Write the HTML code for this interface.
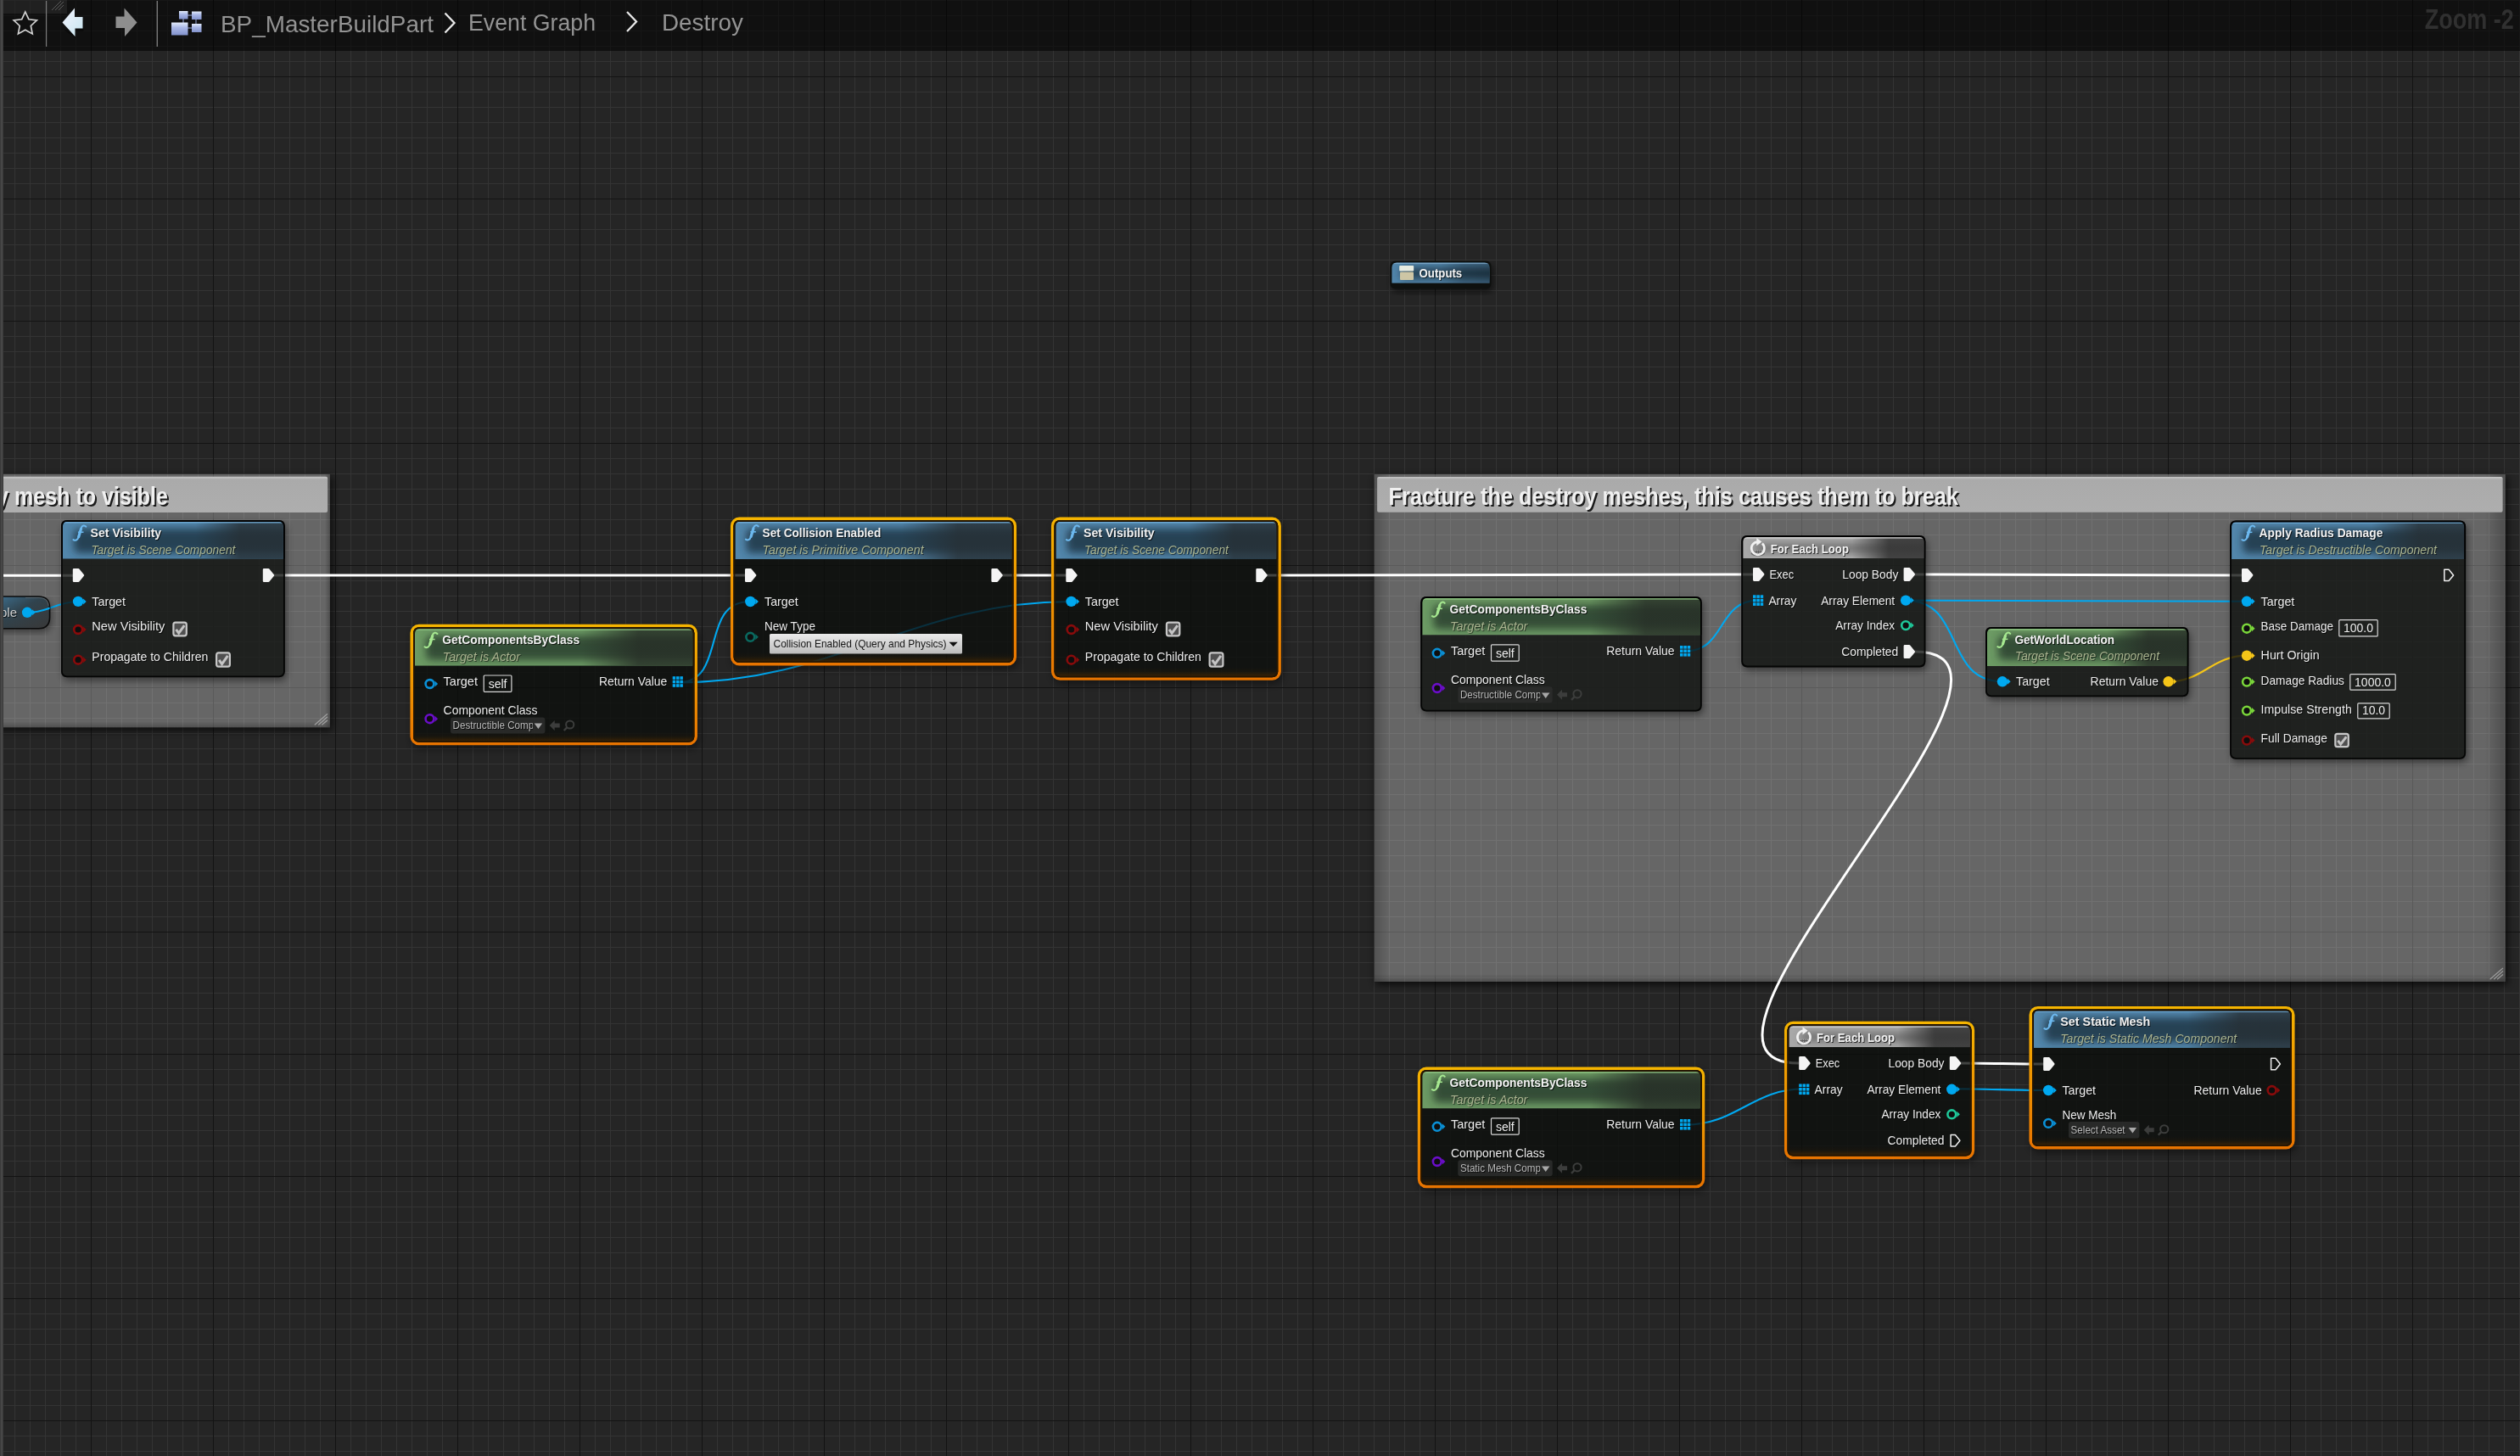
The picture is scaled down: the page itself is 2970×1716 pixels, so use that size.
<!DOCTYPE html>
<html><head><meta charset="utf-8"><title>BP_MasterBuildPart - Event Graph</title>
<style>
html,body{margin:0;padding:0;background:#262626;overflow:hidden;}
svg{display:block;font-family:"Liberation Sans", sans-serif;will-change:transform;}
</style></head><body>
<svg width="2970" height="1716" viewBox="0 0 2970 1716">
<defs>
<linearGradient id="hdrBlue" x1="0" y1="0" x2="0" y2="1">
<stop offset="0" stop-color="#6aa6d2"/><stop offset="0.06" stop-color="#5089b2"/>
<stop offset="0.45" stop-color="#22394c"/><stop offset="0.75" stop-color="#2e4e66"/>
<stop offset="1" stop-color="#4c7a9c"/></linearGradient><linearGradient id="hdrGreen" x1="0" y1="0" x2="0" y2="1">
<stop offset="0" stop-color="#9ccc90"/><stop offset="0.06" stop-color="#7eae74"/>
<stop offset="0.45" stop-color="#304a30"/><stop offset="0.75" stop-color="#3f5f3e"/>
<stop offset="1" stop-color="#5e8a5a"/></linearGradient><linearGradient id="hdrGray" x1="0" y1="0" x2="0" y2="1">
<stop offset="0" stop-color="#c8c8c8"/><stop offset="0.1" stop-color="#9a9a9a"/>
<stop offset="0.55" stop-color="#5a5a5a"/><stop offset="1" stop-color="#7a7a7a"/></linearGradient><linearGradient id="hdrShadeX" x1="0" y1="0" x2="1" y2="0">
<stop offset="0" stop-color="#000" stop-opacity="0"/><stop offset="0.5" stop-color="#000" stop-opacity="0.0"/>
<stop offset="0.72" stop-color="#000" stop-opacity="0.22"/><stop offset="1" stop-color="#000" stop-opacity="0.3"/></linearGradient><linearGradient id="hdrShadeXB" x1="0" y1="0" x2="1" y2="0">
<stop offset="0" stop-color="#262e33" stop-opacity="0"/><stop offset="0.6" stop-color="#262e33" stop-opacity="0"/>
<stop offset="0.8" stop-color="#262e33" stop-opacity="0.8"/><stop offset="1" stop-color="#262e33" stop-opacity="0.8"/></linearGradient><linearGradient id="hdrShadeXGn" x1="0" y1="0" x2="1" y2="0">
<stop offset="0" stop-color="#262d26" stop-opacity="0"/><stop offset="0.6" stop-color="#262d26" stop-opacity="0"/>
<stop offset="0.8" stop-color="#262d26" stop-opacity="0.8"/><stop offset="1" stop-color="#262d26" stop-opacity="0.8"/></linearGradient><linearGradient id="hdrShadeXG" x1="0" y1="0" x2="1" y2="0">
<stop offset="0" stop-color="#303030" stop-opacity="0"/><stop offset="0.6" stop-color="#303030" stop-opacity="0"/>
<stop offset="0.8" stop-color="#303030" stop-opacity="0.85"/><stop offset="1" stop-color="#303030" stop-opacity="0.85"/></linearGradient><filter id="hblur" x="-20%" y="-50%" width="140%" height="200%"><feGaussianBlur stdDeviation="5"/></filter><linearGradient id="selOrange" x1="0" y1="0" x2="0" y2="1">
<stop offset="0" stop-color="#f5b400"/><stop offset="1" stop-color="#e87400"/></linearGradient><linearGradient id="selInner" x1="0" y1="0" x2="0" y2="1">
<stop offset="0" stop-color="#3a2200" stop-opacity="0"/><stop offset="0.45" stop-color="#3a2200" stop-opacity="0.15"/>
<stop offset="1" stop-color="#4a2a04" stop-opacity="0.75"/></linearGradient><filter id="nshadow" x="-10%" y="-10%" width="120%" height="130%">
<feGaussianBlur in="SourceAlpha" stdDeviation="4"/><feOffset dx="2" dy="4"/>
<feComponentTransfer><feFuncA type="linear" slope="0.55"/></feComponentTransfer>
<feMerge><feMergeNode/></feMerge></filter><linearGradient id="tbArrowL" x1="0" y1="0" x2="1" y2="1">
<stop offset="0" stop-color="#f4f4ff"/><stop offset="1" stop-color="#c6e4ee"/></linearGradient><linearGradient id="bpIcon" x1="0" y1="0" x2="0" y2="1">
<stop offset="0" stop-color="#e4ecfa"/><stop offset="0.4" stop-color="#aab8e6"/><stop offset="1" stop-color="#8292cc"/></linearGradient><linearGradient id="ddLight" x1="0" y1="0" x2="0" y2="1">
<stop offset="0" stop-color="#eaeaea"/><stop offset="1" stop-color="#bcbcbc"/></linearGradient><linearGradient id="commentTitle" x1="0" y1="0" x2="0" y2="1">
<stop offset="0" stop-color="#c8c8c8"/><stop offset="0.08" stop-color="#aaaaaa"/><stop offset="1" stop-color="#aeaeae"/></linearGradient><linearGradient id="pillGrad" x1="0" y1="0" x2="1" y2="1">
<stop offset="0" stop-color="#3f7699" stop-opacity="1"/><stop offset="0.45" stop-color="#2f4450" stop-opacity="0.9"/><stop offset="1" stop-color="#383838" stop-opacity="0.6"/></linearGradient><filter id="cblur" x="-5%" y="-5%" width="110%" height="110%"><feGaussianBlur stdDeviation="5"/></filter><linearGradient id="cinL" x1="0" y1="0" x2="1" y2="0"><stop offset="0" stop-color="#000" stop-opacity="0.2"/><stop offset="1" stop-color="#000" stop-opacity="0"/></linearGradient><linearGradient id="cinR" x1="1" y1="0" x2="0" y2="0"><stop offset="0" stop-color="#000" stop-opacity="0.24"/><stop offset="1" stop-color="#000" stop-opacity="0"/></linearGradient><linearGradient id="cinB" x1="0" y1="1" x2="0" y2="0"><stop offset="0" stop-color="#000" stop-opacity="0.22"/><stop offset="1" stop-color="#000" stop-opacity="0"/></linearGradient><linearGradient id="cshB" x1="0" y1="0" x2="0" y2="1"><stop offset="0" stop-color="#000" stop-opacity="0.5"/><stop offset="1" stop-color="#000" stop-opacity="0"/></linearGradient><linearGradient id="cshR" x1="0" y1="0" x2="1" y2="0"><stop offset="0" stop-color="#000" stop-opacity="0.45"/><stop offset="1" stop-color="#000" stop-opacity="0"/></linearGradient><mask id="cm-20" maskUnits="userSpaceOnUse" x="0" y="0" width="2970" height="1716"><rect x="0" y="0" width="2970" height="1716" fill="#fff"/><rect x="-20" y="558.9" width="408.9" height="298.4" fill="#000"/></mask><clipPath id="clipTitle-20"><rect x="4" y="561.8" width="382.1" height="42.10000000000002"/></clipPath><mask id="cm1619" maskUnits="userSpaceOnUse" x="0" y="0" width="2970" height="1716"><rect x="0" y="0" width="2970" height="1716" fill="#fff"/><rect x="1619.8" y="559" width="1333.0000000000002" height="598" fill="#000"/></mask><clipPath id="clipTitle1619"><rect x="1623.1" y="562" width="1326.5" height="41.700000000000045"/></clipPath><clipPath id="hcOut"><path d="M1640.4 333.8 V315.5 Q1640.4 309.5 1646.4 309.5 H1749.5 Q1755.5 309.5 1755.5 315.5 V333.8 Z"/></clipPath><mask id="m72_613" maskUnits="userSpaceOnUse" x="0" y="0" width="2970" height="1716"><rect x="0" y="0" width="2970" height="1716" fill="#fff"/><rect x="72" y="613" width="263.8" height="185.29999999999995" rx="7" fill="#000"/></mask><clipPath id="hc72_613"><path d="M74 658.7 V620 Q74 615 79 615 H328.8 Q333.8 615 333.8 620 V658.7 Z"/></clipPath><clipPath id="pillclip"><path d="M-10 703 H45.5 Q58.6 703 58.6 716.5 V727.2 Q58.6 740.7 45.5 740.7 H-10 Z"/></clipPath><mask id="m487_739" maskUnits="userSpaceOnUse" x="0" y="0" width="2970" height="1716"><rect x="0" y="0" width="2970" height="1716" fill="#fff"/><rect x="487.0" y="739.3000000000001" width="331.4000000000001" height="135.5" rx="7" fill="#000"/></mask><clipPath id="hc487_739"><path d="M489.0 784.8000000000001 V746.3000000000001 Q489.0 741.3000000000001 494.0 741.3000000000001 H811.4000000000001 Q816.4000000000001 741.3000000000001 816.4000000000001 746.3000000000001 V784.8000000000001 Z"/></clipPath><clipPath id="dd531845"><rect x="531.0" y="845.5" width="96.90000000000009" height="19.0"/></clipPath><mask id="m864_613" maskUnits="userSpaceOnUse" x="0" y="0" width="2970" height="1716"><rect x="0" y="0" width="2970" height="1716" fill="#fff"/><rect x="864.5" y="613" width="330.0" height="168" rx="7" fill="#000"/></mask><clipPath id="hc864_613"><path d="M866.5 659 V620 Q866.5 615 871.5 615 H1187.5 Q1192.5 615 1192.5 620 V659 Z"/></clipPath><mask id="m1242_613" maskUnits="userSpaceOnUse" x="0" y="0" width="2970" height="1716"><rect x="0" y="0" width="2970" height="1716" fill="#fff"/><rect x="1242.5" y="613" width="263.79999999999995" height="185.29999999999995" rx="7" fill="#000"/></mask><clipPath id="hc1242_613"><path d="M1244.5 658.7 V620 Q1244.5 615 1249.5 615 H1499.3 Q1504.3 615 1504.3 620 V658.7 Z"/></clipPath><mask id="m1674_703" maskUnits="userSpaceOnUse" x="0" y="0" width="2970" height="1716"><rect x="0" y="0" width="2970" height="1716" fill="#fff"/><rect x="1674.3" y="703.1" width="331.4000000000001" height="135.5" rx="7" fill="#000"/></mask><clipPath id="hc1674_703"><path d="M1676.3 748.6 V710.1 Q1676.3 705.1 1681.3 705.1 H1998.7 Q2003.7 705.1 2003.7 710.1 V748.6 Z"/></clipPath><clipPath id="dd1718809"><rect x="1718.3" y="809.3" width="96.90000000000009" height="19.0"/></clipPath><mask id="m2052_631" maskUnits="userSpaceOnUse" x="0" y="0" width="2970" height="1716"><rect x="0" y="0" width="2970" height="1716" fill="#fff"/><rect x="2052.3" y="631.1" width="217.0999999999999" height="155.29999999999995" rx="7" fill="#000"/></mask><clipPath id="hc2052_631"><path d="M2054.3 658 V638.1 Q2054.3 633.1 2059.3 633.1 H2262.4 Q2267.4 633.1 2267.4 638.1 V658 Z"/></clipPath><mask id="m2340_739" maskUnits="userSpaceOnUse" x="0" y="0" width="2970" height="1716"><rect x="0" y="0" width="2970" height="1716" fill="#fff"/><rect x="2340" y="739.1" width="239.4000000000001" height="82.19999999999993" rx="7" fill="#000"/></mask><clipPath id="hc2340_739"><path d="M2342 785 V746.1 Q2342 741.1 2347 741.1 H2572.4 Q2577.4 741.1 2577.4 746.1 V785 Z"/></clipPath><mask id="m2628_613" maskUnits="userSpaceOnUse" x="0" y="0" width="2970" height="1716"><rect x="0" y="0" width="2970" height="1716" fill="#fff"/><rect x="2628.1" y="613.4" width="278.0" height="281.30000000000007" rx="7" fill="#000"/></mask><clipPath id="hc2628_613"><path d="M2630.1 659.1 V620.4 Q2630.1 615.4 2635.1 615.4 H2899.1 Q2904.1 615.4 2904.1 620.4 V659.1 Z"/></clipPath><mask id="m1674_1261" maskUnits="userSpaceOnUse" x="0" y="0" width="2970" height="1716"><rect x="0" y="0" width="2970" height="1716" fill="#fff"/><rect x="1674.3" y="1261.1" width="331.4000000000001" height="135.5" rx="7" fill="#000"/></mask><clipPath id="hc1674_1261"><path d="M1676.3 1306.6 V1268.1 Q1676.3 1263.1 1681.3 1263.1 H1998.7 Q2003.7 1263.1 2003.7 1268.1 V1306.6 Z"/></clipPath><clipPath id="dd17181367"><rect x="1718.3" y="1367.3" width="96.90000000000009" height="19.0"/></clipPath><mask id="m2106_1207" maskUnits="userSpaceOnUse" x="0" y="0" width="2970" height="1716"><rect x="0" y="0" width="2970" height="1716" fill="#fff"/><rect x="2106.5" y="1207.3000000000002" width="217.0999999999999" height="155.29999999999973" rx="7" fill="#000"/></mask><clipPath id="hc2106_1207"><path d="M2108.5 1234.2 V1214.3000000000002 Q2108.5 1209.3000000000002 2113.5 1209.3000000000002 H2316.6 Q2321.6 1209.3000000000002 2321.6 1214.3000000000002 V1234.2 Z"/></clipPath><mask id="m2395_1189" maskUnits="userSpaceOnUse" x="0" y="0" width="2970" height="1716"><rect x="0" y="0" width="2970" height="1716" fill="#fff"/><rect x="2395" y="1189.5" width="306" height="161.5" rx="7" fill="#000"/></mask><clipPath id="hc2395_1189"><path d="M2397 1235 V1196.5 Q2397 1191.5 2402 1191.5 H2694 Q2699 1191.5 2699 1196.5 V1235 Z"/></clipPath><clipPath id="dd24381322"><rect x="2438" y="1322" width="68.90000000000009" height="19.5"/></clipPath>
</defs>
<rect x="0" y="0" width="2970" height="1716" fill="#252525"/>
<path d="M17.5 0V1716M35.5 0V1716M53.5 0V1716M71.5 0V1716M89.5 0V1716M125.5 0V1716M143.5 0V1716M161.5 0V1716M179.5 0V1716M197.5 0V1716M215.5 0V1716M233.5 0V1716M269.5 0V1716M287.5 0V1716M305.5 0V1716M323.5 0V1716M341.5 0V1716M359.5 0V1716M377.5 0V1716M413.5 0V1716M431.5 0V1716M449.5 0V1716M467.5 0V1716M485.5 0V1716M503.5 0V1716M521.5 0V1716M557.5 0V1716M575.5 0V1716M593.5 0V1716M611.5 0V1716M629.5 0V1716M647.5 0V1716M665.5 0V1716M701.5 0V1716M719.5 0V1716M737.5 0V1716M755.5 0V1716M773.5 0V1716M791.5 0V1716M809.5 0V1716M845.5 0V1716M863.5 0V1716M881.5 0V1716M899.5 0V1716M917.5 0V1716M935.5 0V1716M953.5 0V1716M989.5 0V1716M1007.5 0V1716M1025.5 0V1716M1043.5 0V1716M1061.5 0V1716M1079.5 0V1716M1097.5 0V1716M1133.5 0V1716M1151.5 0V1716M1169.5 0V1716M1187.5 0V1716M1205.5 0V1716M1223.5 0V1716M1241.5 0V1716M1277.5 0V1716M1295.5 0V1716M1313.5 0V1716M1331.5 0V1716M1349.5 0V1716M1367.5 0V1716M1385.5 0V1716M1421.5 0V1716M1439.5 0V1716M1457.5 0V1716M1475.5 0V1716M1493.5 0V1716M1511.5 0V1716M1529.5 0V1716M1565.5 0V1716M1583.5 0V1716M1601.5 0V1716M1619.5 0V1716M1637.5 0V1716M1655.5 0V1716M1673.5 0V1716M1709.5 0V1716M1727.5 0V1716M1745.5 0V1716M1763.5 0V1716M1781.5 0V1716M1799.5 0V1716M1817.5 0V1716M1853.5 0V1716M1871.5 0V1716M1889.5 0V1716M1907.5 0V1716M1925.5 0V1716M1943.5 0V1716M1961.5 0V1716M1997.5 0V1716M2015.5 0V1716M2033.5 0V1716M2051.5 0V1716M2069.5 0V1716M2087.5 0V1716M2105.5 0V1716M2141.5 0V1716M2159.5 0V1716M2177.5 0V1716M2195.5 0V1716M2213.5 0V1716M2231.5 0V1716M2249.5 0V1716M2285.5 0V1716M2303.5 0V1716M2321.5 0V1716M2339.5 0V1716M2357.5 0V1716M2375.5 0V1716M2393.5 0V1716M2429.5 0V1716M2447.5 0V1716M2465.5 0V1716M2483.5 0V1716M2501.5 0V1716M2519.5 0V1716M2537.5 0V1716M2573.5 0V1716M2591.5 0V1716M2609.5 0V1716M2627.5 0V1716M2645.5 0V1716M2663.5 0V1716M2681.5 0V1716M2717.5 0V1716M2735.5 0V1716M2753.5 0V1716M2771.5 0V1716M2789.5 0V1716M2807.5 0V1716M2825.5 0V1716M2861.5 0V1716M2879.5 0V1716M2897.5 0V1716M2915.5 0V1716M2933.5 0V1716M2951.5 0V1716M2969.5 0V1716" stroke="#343434" stroke-width="1" fill="none"/>
<path d="M0 0.5H2970M0 18.5H2970M0 36.5H2970M0 54.5H2970M0 72.5H2970M0 108.5H2970M0 126.5H2970M0 144.5H2970M0 162.5H2970M0 180.5H2970M0 198.5H2970M0 216.5H2970M0 252.5H2970M0 270.5H2970M0 288.5H2970M0 306.5H2970M0 324.5H2970M0 342.5H2970M0 360.5H2970M0 396.5H2970M0 414.5H2970M0 432.5H2970M0 450.5H2970M0 468.5H2970M0 486.5H2970M0 504.5H2970M0 540.5H2970M0 558.5H2970M0 576.5H2970M0 594.5H2970M0 612.5H2970M0 630.5H2970M0 648.5H2970M0 684.5H2970M0 702.5H2970M0 720.5H2970M0 738.5H2970M0 756.5H2970M0 774.5H2970M0 792.5H2970M0 828.5H2970M0 846.5H2970M0 864.5H2970M0 882.5H2970M0 900.5H2970M0 918.5H2970M0 936.5H2970M0 972.5H2970M0 990.5H2970M0 1008.5H2970M0 1026.5H2970M0 1044.5H2970M0 1062.5H2970M0 1080.5H2970M0 1116.5H2970M0 1134.5H2970M0 1152.5H2970M0 1170.5H2970M0 1188.5H2970M0 1206.5H2970M0 1224.5H2970M0 1260.5H2970M0 1278.5H2970M0 1296.5H2970M0 1314.5H2970M0 1332.5H2970M0 1350.5H2970M0 1368.5H2970M0 1404.5H2970M0 1422.5H2970M0 1440.5H2970M0 1458.5H2970M0 1476.5H2970M0 1494.5H2970M0 1512.5H2970M0 1548.5H2970M0 1566.5H2970M0 1584.5H2970M0 1602.5H2970M0 1620.5H2970M0 1638.5H2970M0 1656.5H2970M0 1692.5H2970M0 1710.5H2970" stroke="#343434" stroke-width="1" fill="none"/>
<path d="M107.5 0V1716M0 90.5H2970M251.5 0V1716M0 234.5H2970M395.5 0V1716M0 378.5H2970M539.5 0V1716M0 522.5H2970M683.5 0V1716M0 666.5H2970M827.5 0V1716M0 810.5H2970M971.5 0V1716M0 954.5H2970M1115.5 0V1716M0 1098.5H2970M1259.5 0V1716M0 1242.5H2970M1403.5 0V1716M0 1386.5H2970M1547.5 0V1716M0 1530.5H2970M1691.5 0V1716M0 1674.5H2970M1835.5 0V1716M1979.5 0V1716M2123.5 0V1716M2267.5 0V1716M2411.5 0V1716M2555.5 0V1716M2699.5 0V1716M2843.5 0V1716" stroke="#131313" stroke-width="1" fill="none"/>
<g mask="url(#cm-20)"><rect x="-18" y="561.9" width="408.9" height="298.4" fill="#000" opacity="0.75" filter="url(#cblur)"/></g>
<rect x="-20" y="558.9" width="408.9" height="298.4" fill="#ffffff" fill-opacity="0.30"/>
<rect x="-20" y="558.9" width="18" height="298.4" fill="url(#cinL)"/>
<rect x="382.9" y="558.9" width="6" height="298.4" fill="url(#cinR)"/>
<rect x="-20" y="850.3" width="408.9" height="7" fill="url(#cinB)"/>
<rect x="-20" y="561.8" width="406.1" height="42.10000000000002" rx="2" fill="url(#commentTitle)"/>
<g clip-path="url(#clipTitle-20)">
<text x="-124.4" y="597.1" font-size="29" font-weight="bold" font-style="normal" fill="#1a1a1a" textLength="324.4" lengthAdjust="spacingAndGlyphs" >Set destroy mesh to visible</text>
<text x="-126.4" y="595.1" font-size="29" font-weight="bold" font-style="normal" fill="#f0f0f0" textLength="324.4" lengthAdjust="spacingAndGlyphs" >Set destroy mesh to visible</text>
</g>
<path d="M371.2 854.0999999999999 L385.7 841.5999999999999 M375.7 854.0999999999999 L385.7 845.0999999999999 M379.7 854.0999999999999 L385.7 849.0999999999999" stroke="#c8c8c8" stroke-opacity="0.6" stroke-width="1.3" stroke-linecap="round"/>
<g mask="url(#cm1619)"><rect x="1621.8" y="562" width="1333.0000000000002" height="598" fill="#000" opacity="0.75" filter="url(#cblur)"/></g>
<rect x="1619.8" y="559" width="1333.0000000000002" height="598" fill="#ffffff" fill-opacity="0.30"/>
<rect x="1619.8" y="559" width="18" height="598" fill="url(#cinL)"/>
<rect x="2928.8" y="559" width="24" height="598" fill="url(#cinR)"/>
<rect x="1619.8" y="1148" width="1333.0000000000002" height="9" fill="url(#cinB)"/>
<rect x="1623.1" y="562" width="1326.5" height="41.700000000000045" rx="2" fill="url(#commentTitle)"/>
<g clip-path="url(#clipTitle1619)">
<text x="1638.6" y="596.9" font-size="29" font-weight="bold" font-style="normal" fill="#1a1a1a" textLength="671.4" lengthAdjust="spacingAndGlyphs" >Fracture the destroy meshes, this causes them to break</text>
<text x="1636.6" y="594.9" font-size="29" font-weight="bold" font-style="normal" fill="#f0f0f0" textLength="671.4" lengthAdjust="spacingAndGlyphs" >Fracture the destroy meshes, this causes them to break</text>
</g>
<path d="M2935.1000000000004 1153.8 L2949.6000000000004 1141.3 M2939.6000000000004 1153.8 L2949.6000000000004 1144.8 M2943.6000000000004 1153.8 L2949.6000000000004 1148.8" stroke="#c8c8c8" stroke-opacity="0.6" stroke-width="1.3" stroke-linecap="round"/>
<path d="M4.0 678.2 C32.0 678.2 60.0 678.2 88.0 678.2" fill="none" stroke="#ffffff" stroke-width="3.0" stroke-opacity="1"/>
<path d="M322.0 678.0 C508.0 678.0 694.0 678.0 880.0 678.0" fill="none" stroke="#ffffff" stroke-width="3.0" stroke-opacity="1"/>
<path d="M1180.0 678.0 C1206.0 678.0 1232.0 678.0 1258.0 678.0" fill="none" stroke="#ffffff" stroke-width="3.0" stroke-opacity="1"/>
<path d="M1493.0 678.0 C1685.0 678.0 1876.0 677.0 2068.0 677.0" fill="none" stroke="#ffffff" stroke-width="3.0" stroke-opacity="1"/>
<path d="M2255.0 677.0 C2385.0 677.0 2514.0 678.0 2644.0 678.0" fill="none" stroke="#ffffff" stroke-width="3.0" stroke-opacity="1"/>
<path d="M2256.6 768.0 C2447.7 768.0 1928.9 1253.0 2120.0 1253.0" fill="none" stroke="#ffffff" stroke-width="3.0" stroke-opacity="1"/>
<path d="M2309.0 1253.0 C2343.0 1253.0 2376.0 1254.0 2410.0 1254.0" fill="none" stroke="#ffffff" stroke-width="3.0" stroke-opacity="1"/>
<path d="M32.0 722.0 C56.3 722.0 67.7 709.0 92.0 709.0" fill="none" stroke="#00a8f0" stroke-width="2.1" stroke-opacity="1"/>
<path d="M798.0 804.5 C858.5 804.5 823.5 709.0 884.0 709.0" fill="none" stroke="#00a8f0" stroke-width="2.1" stroke-opacity="1"/>
<path d="M798.0 804.5 C984.5 804.5 1075.5 709.0 1262.0 709.0" fill="none" stroke="#00a8f0" stroke-width="2.1" stroke-opacity="1"/>
<path d="M1986.0 767.5 C2034.6 767.5 2023.4 707.6 2072.0 707.6" fill="none" stroke="#00a8f0" stroke-width="2.1" stroke-opacity="1"/>
<path d="M2246.0 707.6 C2380.4 707.6 2513.6 708.8 2648.0 708.8" fill="none" stroke="#00a8f0" stroke-width="2.1" stroke-opacity="1"/>
<path d="M2246.0 707.6 C2315.9 707.6 2290.1 803.3 2360.0 803.3" fill="none" stroke="#00a8f0" stroke-width="2.1" stroke-opacity="1"/>
<path d="M1986.0 1325.7 C2046.8 1325.7 2065.2 1283.3 2126.0 1283.3" fill="none" stroke="#00a8f0" stroke-width="2.1" stroke-opacity="1"/>
<path d="M2300.0 1283.3 C2338.6 1283.3 2375.4 1285.0 2414.0 1285.0" fill="none" stroke="#00a8f0" stroke-width="2.1" stroke-opacity="1"/>
<path d="M2555.6 803.3 C2596.6 803.3 2607.0 772.7 2648.0 772.7" fill="none" stroke="#f5c518" stroke-width="2.2" stroke-opacity="1"/>
<rect x="1638.4" y="307.5" width="119.09999999999991" height="33.0" rx="6" fill="#000" filter="url(#nshadow)"/>
<rect x="1638.4" y="307.5" width="119.09999999999991" height="33.0" rx="6" fill="#0e100e"/>
<g clip-path="url(#hcOut)">
<rect x="1638.4" y="307.5" width="119.09999999999991" height="26.30000000000001" fill="#5286ab"/>
<rect x="1650.4" y="315.5" width="119.09999999999991" height="13.300000000000011" rx="5" fill="#233a4c" opacity="0.92" filter="url(#hblur)"/>
<rect x="1638.4" y="307.5" width="119.09999999999991" height="26.30000000000001" fill="url(#hdrShadeX)"/>
<rect x="1638.4" y="309.5" width="119.09999999999991" height="1.6" fill="#8ab8d8" opacity="0.7"/>
</g>
<rect x="1649.2" y="313" width="17" height="6.5" rx="1" fill="#e8ece0"/>
<rect x="1650" y="320.5" width="16" height="9.5" rx="1" fill="#cdc6a5"/>
<text x="1673.6" y="328.0" font-size="14" font-weight="bold" font-style="normal" fill="rgba(0,0,0,0.6)" textLength="50.6" lengthAdjust="spacingAndGlyphs" >Outputs</text>
<text x="1672.6" y="327.0" font-size="14" font-weight="bold" font-style="normal" fill="#f4f4f4" textLength="50.6" lengthAdjust="spacingAndGlyphs" >Outputs</text>
<g mask="url(#m72_613)"><rect x="72" y="613" width="263.8" height="185.29999999999995" rx="7" fill="#000" opacity="0.8" filter="url(#nshadow)"/></g>
<rect x="72" y="613" width="263.8" height="185.29999999999995" rx="7" fill="rgba(0,0,0,0.0)"/>
<path d="M72 658.7 H335.8 V791.3 Q335.8 798.3 328.8 798.3 H79 Q72 798.3 72 791.3 Z" fill="rgba(12,14,12,0.78)"/>
<path d="M72 658.7 V620 Q72 613 79 613 H328.8 Q335.8 613 335.8 620 V658.7 Z" fill="#050505"/>
<g clip-path="url(#hc72_613)">
<rect x="72" y="613" width="263.8" height="45.700000000000045" fill="#5286ab"/>
<rect x="87" y="623" width="263.8" height="28.700000000000045" rx="6" fill="#233a4c" opacity="0.9" filter="url(#hblur)"/>
<rect x="72" y="613" width="263.8" height="45.700000000000045" fill="url(#hdrShadeXB)"/>
<rect x="72" y="615" width="263.8" height="1.6" fill="#74b0dc" opacity="0.75"/>
</g>
<rect x="72.9" y="613.9" width="262.0" height="183.49999999999994" rx="6" fill="none" stroke="rgba(0,0,0,0.85)" stroke-width="1.8"/>
<path d="M101.3 620.6999999999999 C99.69999999999999 618.6999999999999 96.5 619.1 95.69999999999999 622.3 L92.3 633.5 C91.39999999999999 636.6999999999999 88.69999999999999 637.5 86.5 636.1" fill="none" stroke="#6cb8ee" stroke-width="2.1" stroke-linecap="round"/>
<path d="M95.5 623.4 L92.69999999999999 632.6999999999999" stroke="#6cb8ee" stroke-width="3.2" stroke-linecap="round"/>
<path d="M91.89999999999999 627.1999999999999 H98.5" stroke="#6cb8ee" stroke-width="1.5"/>
<text x="107.6" y="634.1" font-size="14.3" font-weight="bold" font-style="normal" fill="rgba(0,0,0,0.75)" textLength="83.6" lengthAdjust="spacingAndGlyphs" >Set Visibility</text>
<text x="106.6" y="633.1" font-size="14.3" font-weight="bold" font-style="normal" fill="#f2f2f2" textLength="83.6" lengthAdjust="spacingAndGlyphs" >Set Visibility</text>
<text x="108.4" y="654.0" font-size="14.6" font-weight="normal" font-style="italic" fill="rgba(0,0,0,0.5)" textLength="170.0" lengthAdjust="spacingAndGlyphs" >Target is Scene Component</text>
<text x="107.4" y="653.0" font-size="14.6" font-weight="normal" font-style="italic" fill="#a9b38f" textLength="170.0" lengthAdjust="spacingAndGlyphs" >Target is Scene Component</text>
<path d="M87.1 671.3 H92.39999999999999 L97.89999999999999 678 L92.39999999999999 684.7 H87.1 Z" fill="#f4f4f4" stroke="#f4f4f4" stroke-width="2.6" stroke-linejoin="round"/>
<path d="M311.1 671.3 H316.40000000000003 L321.90000000000003 678 L316.40000000000003 684.7 H311.1 Z" fill="#f4f4f4" stroke="#f4f4f4" stroke-width="2.6" stroke-linejoin="round"/>
<circle cx="92.1" cy="708.9" r="6.2" fill="#00a8f0"/><path d="M98.1 705.4 L101.69999999999999 708.9 L98.1 712.4 Z" fill="#00a8f0"/>
<text x="109.3" y="714.8" font-size="14.2" font-weight="normal" font-style="normal" fill="rgba(0,0,0,0.7)" textLength="39.7" lengthAdjust="spacingAndGlyphs" >Target</text>
<text x="108.3" y="713.8" font-size="14.2" font-weight="normal" font-style="normal" fill="#ececec" textLength="39.7" lengthAdjust="spacingAndGlyphs" >Target</text>
<path d="M98.1 738.5 L101.69999999999999 742 L98.1 745.5 Z" fill="#880b0b"/><circle cx="92.1" cy="742" r="4.9" fill="#0e0e0e" stroke="#880b0b" stroke-width="2.6"/>
<text x="109.3" y="743.8" font-size="14.2" font-weight="normal" font-style="normal" fill="rgba(0,0,0,0.7)" textLength="86.0" lengthAdjust="spacingAndGlyphs" >New Visibility</text>
<text x="108.3" y="742.8" font-size="14.2" font-weight="normal" font-style="normal" fill="#ececec" textLength="86.0" lengthAdjust="spacingAndGlyphs" >New Visibility</text>
<rect x="204.4" y="733.7" width="15.399999999999995" height="15.599999999999955" rx="2.5" fill="#505050" stroke="#c8c8c8" stroke-width="2.2"/>
<path d="M207.5 741.856 L210.692 746.1999999999999 L217.3 737.2" fill="none" stroke="#c4c4c4" stroke-width="3"/>
<path d="M98.1 774.2 L101.69999999999999 777.7 L98.1 781.2 Z" fill="#880b0b"/><circle cx="92.1" cy="777.7" r="4.9" fill="#0e0e0e" stroke="#880b0b" stroke-width="2.6"/>
<text x="109.3" y="779.9" font-size="14.2" font-weight="normal" font-style="normal" fill="rgba(0,0,0,0.7)" textLength="137.0" lengthAdjust="spacingAndGlyphs" >Propagate to Children</text>
<text x="108.3" y="778.9" font-size="14.2" font-weight="normal" font-style="normal" fill="#ececec" textLength="137.0" lengthAdjust="spacingAndGlyphs" >Propagate to Children</text>
<rect x="255.1" y="769.4" width="15.8" height="16.3" rx="2.5" fill="#505050" stroke="#c8c8c8" stroke-width="2.2"/>
<path d="M258.2 777.92 L261.56 782.5999999999999 L268.4 772.9" fill="none" stroke="#c4c4c4" stroke-width="3"/>
<path d="M-10 703 H45.5 Q58.6 703 58.6 716.5 V727.2 Q58.6 740.7 45.5 740.7 H-10 Z" fill="#000" opacity="0.8" filter="url(#nshadow)"/>
<path d="M-10 703 H45.5 Q58.6 703 58.6 716.5 V727.2 Q58.6 740.7 45.5 740.7 H-10 Z" fill="#3a3a3a"/>
<path d="M-10 703 H45.5 Q58.6 703 58.6 716.5 V727.2 Q58.6 740.7 45.5 740.7 H-10 Z" fill="url(#pillGrad)" stroke="#0a0a0a" stroke-width="1.6"/>
<path d="M30 704.5 H45.5 Q57 704.5 57.2 714" fill="none" stroke="#9a9a9a" stroke-opacity="0.35" stroke-width="1.2"/>
<text x="-22.9" y="728.0" font-size="15" font-weight="normal" font-style="normal" fill="rgba(0,0,0,0.7)" >Visible</text>
<text x="-23.9" y="727.0" font-size="15" font-weight="normal" font-style="normal" fill="#d0d0d0" >Visible</text>
<g clip-path="url(#pillclip)">
<path d="M32.0 722.0 C56.3 722.0 67.7 709.0 92.0 709.0" fill="none" stroke="#00a8f0" stroke-width="2.1" stroke-opacity="1"/>
</g>
<circle cx="32.1" cy="721.8" r="6.2" fill="#00a8f0"/><path d="M38.1 718.3 L41.7 721.8 L38.1 725.3 Z" fill="#00a8f0"/>
<g mask="url(#m487_739)"><rect x="483.5" y="735.8000000000001" width="338.4000000000001" height="142.5" rx="10.5" fill="#000" opacity="0.8" filter="url(#nshadow)"/></g>
<rect x="485.25" y="737.5500000000001" width="334.9000000000001" height="139.0" rx="8.5" fill="none" stroke="url(#selOrange)" stroke-width="3.6"/>
<rect x="487.0" y="739.3000000000001" width="331.4000000000001" height="135.5" rx="7" fill="rgba(0,0,0,0.0)"/>
<path d="M487.0 784.8000000000001 H818.4000000000001 V867.8000000000001 Q818.4000000000001 874.8000000000001 811.4000000000001 874.8000000000001 H494.0 Q487.0 874.8000000000001 487.0 867.8000000000001 Z" fill="rgba(12,14,12,0.78)"/>
<rect x="488.0" y="862.8000000000001" width="329.4000000000001" height="11" rx="6" fill="url(#selInner)"/>
<path d="M487.0 784.8000000000001 V746.3000000000001 Q487.0 739.3000000000001 494.0 739.3000000000001 H811.4000000000001 Q818.4000000000001 739.3000000000001 818.4000000000001 746.3000000000001 V784.8000000000001 Z" fill="#050505"/>
<g clip-path="url(#hc487_739)">
<rect x="487.0" y="739.3000000000001" width="331.4000000000001" height="45.5" fill="#6c9a64"/>
<rect x="502.0" y="749.3000000000001" width="331.4000000000001" height="28.5" rx="6" fill="#2e4530" opacity="0.9" filter="url(#hblur)"/>
<rect x="487.0" y="739.3000000000001" width="331.4000000000001" height="45.5" fill="url(#hdrShadeXGn)"/>
<rect x="487.0" y="741.3000000000001" width="331.4000000000001" height="1.6" fill="#94cc88" opacity="0.75"/>
</g>
<rect x="487.9" y="740.2" width="329.6000000000001" height="133.7" rx="6" fill="none" stroke="rgba(38,22,2,0.95)" stroke-width="1.8"/>
<path d="M515.4000000000001 747.0 C513.8000000000001 745.0 510.6 745.4000000000001 509.80000000000007 748.6 L506.40000000000003 759.8000000000001 C505.50000000000006 763.0 502.80000000000007 763.8000000000001 500.6 762.4000000000001" fill="none" stroke="#a6e890" stroke-width="2.1" stroke-linecap="round"/>
<path d="M509.6 749.7 L506.80000000000007 759.0" stroke="#a6e890" stroke-width="3.2" stroke-linecap="round"/>
<path d="M506.00000000000006 753.5 H512.6" stroke="#a6e890" stroke-width="1.5"/>
<text x="522.3" y="760.3" font-size="14.3" font-weight="bold" font-style="normal" fill="rgba(0,0,0,0.75)" textLength="161.8" lengthAdjust="spacingAndGlyphs" >GetComponentsByClass</text>
<text x="521.3" y="759.3" font-size="14.3" font-weight="bold" font-style="normal" fill="#f2f2f2" textLength="161.8" lengthAdjust="spacingAndGlyphs" >GetComponentsByClass</text>
<text x="522.7" y="780.1" font-size="14.6" font-weight="normal" font-style="italic" fill="rgba(0,0,0,0.5)" textLength="91.4" lengthAdjust="spacingAndGlyphs" >Target is Actor</text>
<text x="521.7" y="779.1" font-size="14.6" font-weight="normal" font-style="italic" fill="#a9b38f" textLength="91.4" lengthAdjust="spacingAndGlyphs" >Target is Actor</text>
<path d="M512.5 802.5 L516.1 806.0 L512.5 809.5 Z" fill="#0a90d6"/><circle cx="506.5" cy="806.0" r="4.9" fill="#0e0e0e" stroke="#0a90d6" stroke-width="2.6"/>
<text x="523.6" y="809.3" font-size="14.2" font-weight="normal" font-style="normal" fill="rgba(0,0,0,0.7)" textLength="40.4" lengthAdjust="spacingAndGlyphs" >Target</text>
<text x="522.6" y="808.3" font-size="14.2" font-weight="normal" font-style="normal" fill="#ececec" textLength="40.4" lengthAdjust="spacingAndGlyphs" >Target</text>
<rect x="570.2" y="796.0" width="32.700000000000045" height="19.300000000000068" rx="1" fill="none" stroke="#d8d8d8" stroke-width="1.2"/>
<text x="586.6" y="810.8" font-size="14" font-weight="normal" font-style="normal" fill="#ececec" text-anchor="middle" >self</text>
<text x="787.3" y="809.3" font-size="14.2" font-weight="normal" font-style="normal" fill="rgba(0,0,0,0.7)" textLength="80.3" lengthAdjust="spacingAndGlyphs" text-anchor="end" >Return Value</text>
<text x="786.3" y="808.3" font-size="14.2" font-weight="normal" font-style="normal" fill="#ececec" textLength="80.3" lengthAdjust="spacingAndGlyphs" text-anchor="end" >Return Value</text>
<rect x="792.70" y="797.20" width="3.5" height="3.6" fill="#00a8f0"/><rect x="792.70" y="801.70" width="3.5" height="3.6" fill="#00a8f0"/><rect x="792.70" y="806.20" width="3.5" height="3.6" fill="#00a8f0"/><rect x="797.05" y="797.20" width="3.5" height="3.6" fill="#00a8f0"/><rect x="797.05" y="801.70" width="3.5" height="3.6" fill="#00a8f0"/><rect x="797.05" y="806.20" width="3.5" height="3.6" fill="#00a8f0"/><rect x="801.40" y="797.20" width="3.5" height="3.6" fill="#00a8f0"/><rect x="801.40" y="801.70" width="3.5" height="3.6" fill="#00a8f0"/><rect x="801.40" y="806.20" width="3.5" height="3.6" fill="#00a8f0"/>
<path d="M512.5 843.7 L516.1 847.2 L512.5 850.7 Z" fill="#6a0ec8"/><circle cx="506.5" cy="847.2" r="4.9" fill="#0e0e0e" stroke="#6a0ec8" stroke-width="2.6"/>
<text x="523.6" y="843.0" font-size="14.2" font-weight="normal" font-style="normal" fill="rgba(0,0,0,0.7)" textLength="110.9" lengthAdjust="spacingAndGlyphs" >Component Class</text>
<text x="522.6" y="842.0" font-size="14.2" font-weight="normal" font-style="normal" fill="#ececec" textLength="110.9" lengthAdjust="spacingAndGlyphs" >Component Class</text>
<rect x="531.0" y="845.5" width="111.40000000000009" height="19.0" rx="3" fill="#2b2c2b" fill-opacity="0.9"/>
<g clip-path="url(#dd531845)">
<text x="534.6" y="860.3" font-size="12.5" font-weight="normal" font-style="normal" fill="rgba(0,0,0,0.8)" textLength="95.6" lengthAdjust="spacingAndGlyphs" >Destructible Comp</text>
<text x="533.6" y="859.3" font-size="12.5" font-weight="normal" font-style="normal" fill="#b8b8b8" textLength="95.6" lengthAdjust="spacingAndGlyphs" >Destructible Comp</text>
</g>
<path d="M629.7 852.6 H639.1 L634.4000000000001 859.1 Z" fill="#a8a8a8"/>
<path d="M647.7 855.0 L653.7 849.0 V852.5 H659.7 V857.5 H653.7 V861.0 Z" fill="#3c3d3c"/>
<circle cx="671.7" cy="854.0" r="4.6" fill="none" stroke="#3c3d3c" stroke-width="2"/><path d="M668.5 857.2 L664.7 861.0" stroke="#3c3d3c" stroke-width="2.4"/>
<g mask="url(#m864_613)"><rect x="861.0" y="609.5" width="337.0" height="175.0" rx="10.5" fill="#000" opacity="0.8" filter="url(#nshadow)"/></g>
<rect x="862.75" y="611.25" width="333.5" height="171.5" rx="8.5" fill="none" stroke="url(#selOrange)" stroke-width="3.6"/>
<rect x="864.5" y="613" width="330.0" height="168" rx="7" fill="rgba(0,0,0,0.0)"/>
<path d="M864.5 659 H1194.5 V774 Q1194.5 781 1187.5 781 H871.5 Q864.5 781 864.5 774 Z" fill="rgba(12,14,12,0.78)"/>
<rect x="865.5" y="769" width="328.0" height="11" rx="6" fill="url(#selInner)"/>
<path d="M864.5 659 V620 Q864.5 613 871.5 613 H1187.5 Q1194.5 613 1194.5 620 V659 Z" fill="#050505"/>
<g clip-path="url(#hc864_613)">
<rect x="864.5" y="613" width="330.0" height="46" fill="#5286ab"/>
<rect x="879.5" y="623" width="330.0" height="29" rx="6" fill="#233a4c" opacity="0.9" filter="url(#hblur)"/>
<rect x="864.5" y="613" width="330.0" height="46" fill="url(#hdrShadeXB)"/>
<rect x="864.5" y="615" width="330.0" height="1.6" fill="#74b0dc" opacity="0.75"/>
</g>
<rect x="865.4" y="613.9" width="328.2" height="166.2" rx="6" fill="none" stroke="rgba(38,22,2,0.95)" stroke-width="1.8"/>
<path d="M893.7 620.3 C892.1 618.3 888.9 618.7 888.1 621.9 L884.7 633.1 C883.8 636.3 881.1 637.1 878.9 635.7" fill="none" stroke="#6cb8ee" stroke-width="2.1" stroke-linecap="round"/>
<path d="M887.9 623.0 L885.1 632.3" stroke="#6cb8ee" stroke-width="3.2" stroke-linecap="round"/>
<path d="M884.3 626.8 H890.9" stroke="#6cb8ee" stroke-width="1.5"/>
<text x="899.6" y="633.9" font-size="14.3" font-weight="bold" font-style="normal" fill="rgba(0,0,0,0.75)" textLength="139.7" lengthAdjust="spacingAndGlyphs" >Set Collision Enabled</text>
<text x="898.6" y="632.9" font-size="14.3" font-weight="bold" font-style="normal" fill="#f2f2f2" textLength="139.7" lengthAdjust="spacingAndGlyphs" >Set Collision Enabled</text>
<text x="899.6" y="653.5" font-size="14.6" font-weight="normal" font-style="italic" fill="rgba(0,0,0,0.5)" textLength="190.0" lengthAdjust="spacingAndGlyphs" >Target is Primitive Component</text>
<text x="898.6" y="652.5" font-size="14.6" font-weight="normal" font-style="italic" fill="#a9b38f" textLength="190.0" lengthAdjust="spacingAndGlyphs" >Target is Primitive Component</text>
<path d="M879.3 671.3 H884.6 L890.1 678 L884.6 684.7 H879.3 Z" fill="#f4f4f4" stroke="#f4f4f4" stroke-width="2.6" stroke-linejoin="round"/>
<path d="M1169.7 671.3 H1175.0 L1180.5 678 L1175.0 684.7 H1169.7 Z" fill="#f4f4f4" stroke="#f4f4f4" stroke-width="2.6" stroke-linejoin="round"/>
<circle cx="884.3" cy="709" r="6.2" fill="#00a8f0"/><path d="M890.3 705.5 L893.9 709 L890.3 712.5 Z" fill="#00a8f0"/>
<text x="902.0" y="715.0" font-size="14.2" font-weight="normal" font-style="normal" fill="rgba(0,0,0,0.7)" textLength="39.7" lengthAdjust="spacingAndGlyphs" >Target</text>
<text x="901.0" y="714.0" font-size="14.2" font-weight="normal" font-style="normal" fill="#ececec" textLength="39.7" lengthAdjust="spacingAndGlyphs" >Target</text>
<path d="M890.3 747.3 L893.9 750.8 L890.3 754.3 Z" fill="#0a6a60"/><circle cx="884.3" cy="750.8" r="4.9" fill="#0e0e0e" stroke="#0a6a60" stroke-width="2.6"/>
<text x="902.0" y="744.2" font-size="14.2" font-weight="normal" font-style="normal" fill="rgba(0,0,0,0.7)" textLength="60.0" lengthAdjust="spacingAndGlyphs" >New Type</text>
<text x="901.0" y="743.2" font-size="14.2" font-weight="normal" font-style="normal" fill="#ececec" textLength="60.0" lengthAdjust="spacingAndGlyphs" >New Type</text>
<rect x="907" y="747.1" width="227" height="23.5" rx="1.5" fill="url(#ddLight)"/>
<text x="911.5" y="763.1" font-size="12.6" font-weight="normal" font-style="normal" fill="#161616" textLength="204.0" lengthAdjust="spacingAndGlyphs" >Collision Enabled (Query and Physics)</text>
<path d="M1118.5 756.8 H1128.7 L1123.6 762 Z" fill="#111"/>
<g mask="url(#m1242_613)"><rect x="1239.0" y="609.5" width="270.79999999999995" height="192.29999999999995" rx="10.5" fill="#000" opacity="0.8" filter="url(#nshadow)"/></g>
<rect x="1240.75" y="611.25" width="267.29999999999995" height="188.79999999999995" rx="8.5" fill="none" stroke="url(#selOrange)" stroke-width="3.6"/>
<rect x="1242.5" y="613" width="263.79999999999995" height="185.29999999999995" rx="7" fill="rgba(0,0,0,0.0)"/>
<path d="M1242.5 658.7 H1506.3 V791.3 Q1506.3 798.3 1499.3 798.3 H1249.5 Q1242.5 798.3 1242.5 791.3 Z" fill="rgba(12,14,12,0.78)"/>
<rect x="1243.5" y="786.3" width="261.79999999999995" height="11" rx="6" fill="url(#selInner)"/>
<path d="M1242.5 658.7 V620 Q1242.5 613 1249.5 613 H1499.3 Q1506.3 613 1506.3 620 V658.7 Z" fill="#050505"/>
<g clip-path="url(#hc1242_613)">
<rect x="1242.5" y="613" width="263.79999999999995" height="45.700000000000045" fill="#5286ab"/>
<rect x="1257.5" y="623" width="263.79999999999995" height="28.700000000000045" rx="6" fill="#233a4c" opacity="0.9" filter="url(#hblur)"/>
<rect x="1242.5" y="613" width="263.79999999999995" height="45.700000000000045" fill="url(#hdrShadeXB)"/>
<rect x="1242.5" y="615" width="263.79999999999995" height="1.6" fill="#74b0dc" opacity="0.75"/>
</g>
<rect x="1243.4" y="613.9" width="261.99999999999994" height="183.49999999999994" rx="6" fill="none" stroke="rgba(38,22,2,0.95)" stroke-width="1.8"/>
<path d="M1271.8 620.6999999999999 C1270.1999999999998 618.6999999999999 1267.0 619.1 1266.1999999999998 622.3 L1262.8 633.5 C1261.8999999999999 636.6999999999999 1259.1999999999998 637.5 1257.0 636.1" fill="none" stroke="#6cb8ee" stroke-width="2.1" stroke-linecap="round"/>
<path d="M1266.0 623.4 L1263.1999999999998 632.6999999999999" stroke="#6cb8ee" stroke-width="3.2" stroke-linecap="round"/>
<path d="M1262.3999999999999 627.1999999999999 H1269.0" stroke="#6cb8ee" stroke-width="1.5"/>
<text x="1278.1" y="634.1" font-size="14.3" font-weight="bold" font-style="normal" fill="rgba(0,0,0,0.75)" textLength="83.6" lengthAdjust="spacingAndGlyphs" >Set Visibility</text>
<text x="1277.1" y="633.1" font-size="14.3" font-weight="bold" font-style="normal" fill="#f2f2f2" textLength="83.6" lengthAdjust="spacingAndGlyphs" >Set Visibility</text>
<text x="1278.9" y="654.0" font-size="14.6" font-weight="normal" font-style="italic" fill="rgba(0,0,0,0.5)" textLength="170.0" lengthAdjust="spacingAndGlyphs" >Target is Scene Component</text>
<text x="1277.9" y="653.0" font-size="14.6" font-weight="normal" font-style="italic" fill="#a9b38f" textLength="170.0" lengthAdjust="spacingAndGlyphs" >Target is Scene Component</text>
<path d="M1257.6 671.3 H1262.8999999999999 L1268.3999999999999 678 L1262.8999999999999 684.7 H1257.6 Z" fill="#f4f4f4" stroke="#f4f4f4" stroke-width="2.6" stroke-linejoin="round"/>
<path d="M1481.6 671.3 H1486.8999999999999 L1492.3999999999999 678 L1486.8999999999999 684.7 H1481.6 Z" fill="#f4f4f4" stroke="#f4f4f4" stroke-width="2.6" stroke-linejoin="round"/>
<circle cx="1262.6" cy="708.9" r="6.2" fill="#00a8f0"/><path d="M1268.6 705.4 L1272.1999999999998 708.9 L1268.6 712.4 Z" fill="#00a8f0"/>
<text x="1279.8" y="714.8" font-size="14.2" font-weight="normal" font-style="normal" fill="rgba(0,0,0,0.7)" textLength="39.7" lengthAdjust="spacingAndGlyphs" >Target</text>
<text x="1278.8" y="713.8" font-size="14.2" font-weight="normal" font-style="normal" fill="#ececec" textLength="39.7" lengthAdjust="spacingAndGlyphs" >Target</text>
<path d="M1268.6 738.5 L1272.1999999999998 742 L1268.6 745.5 Z" fill="#880b0b"/><circle cx="1262.6" cy="742" r="4.9" fill="#0e0e0e" stroke="#880b0b" stroke-width="2.6"/>
<text x="1279.8" y="743.8" font-size="14.2" font-weight="normal" font-style="normal" fill="rgba(0,0,0,0.7)" textLength="86.0" lengthAdjust="spacingAndGlyphs" >New Visibility</text>
<text x="1278.8" y="742.8" font-size="14.2" font-weight="normal" font-style="normal" fill="#ececec" textLength="86.0" lengthAdjust="spacingAndGlyphs" >New Visibility</text>
<rect x="1374.8999999999999" y="733.7" width="15.400000000000137" height="15.599999999999955" rx="2.5" fill="#505050" stroke="#c8c8c8" stroke-width="2.2"/>
<path d="M1378.0 741.856 L1381.192 746.1999999999999 L1387.8000000000002 737.2" fill="none" stroke="#c4c4c4" stroke-width="3"/>
<path d="M1268.6 774.2 L1272.1999999999998 777.7 L1268.6 781.2 Z" fill="#880b0b"/><circle cx="1262.6" cy="777.7" r="4.9" fill="#0e0e0e" stroke="#880b0b" stroke-width="2.6"/>
<text x="1279.8" y="779.9" font-size="14.2" font-weight="normal" font-style="normal" fill="rgba(0,0,0,0.7)" textLength="137.0" lengthAdjust="spacingAndGlyphs" >Propagate to Children</text>
<text x="1278.8" y="778.9" font-size="14.2" font-weight="normal" font-style="normal" fill="#ececec" textLength="137.0" lengthAdjust="spacingAndGlyphs" >Propagate to Children</text>
<rect x="1425.6" y="769.4" width="15.8" height="16.3" rx="2.5" fill="#505050" stroke="#c8c8c8" stroke-width="2.2"/>
<path d="M1428.7 777.92 L1432.06 782.5999999999999 L1438.9 772.9" fill="none" stroke="#c4c4c4" stroke-width="3"/>
<g mask="url(#m1674_703)"><rect x="1674.3" y="703.1" width="331.4000000000001" height="135.5" rx="7" fill="#000" opacity="0.8" filter="url(#nshadow)"/></g>
<rect x="1674.3" y="703.1" width="331.4000000000001" height="135.5" rx="7" fill="rgba(0,0,0,0.0)"/>
<path d="M1674.3 748.6 H2005.7 V831.6 Q2005.7 838.6 1998.7 838.6 H1681.3 Q1674.3 838.6 1674.3 831.6 Z" fill="rgba(12,14,12,0.78)"/>
<path d="M1674.3 748.6 V710.1 Q1674.3 703.1 1681.3 703.1 H1998.7 Q2005.7 703.1 2005.7 710.1 V748.6 Z" fill="#050505"/>
<g clip-path="url(#hc1674_703)">
<rect x="1674.3" y="703.1" width="331.4000000000001" height="45.5" fill="#6c9a64"/>
<rect x="1689.3" y="713.1" width="331.4000000000001" height="28.5" rx="6" fill="#2e4530" opacity="0.9" filter="url(#hblur)"/>
<rect x="1674.3" y="703.1" width="331.4000000000001" height="45.5" fill="url(#hdrShadeXGn)"/>
<rect x="1674.3" y="705.1" width="331.4000000000001" height="1.6" fill="#94cc88" opacity="0.75"/>
</g>
<rect x="1675.2" y="704.0" width="329.6000000000001" height="133.7" rx="6" fill="none" stroke="rgba(0,0,0,0.85)" stroke-width="1.8"/>
<path d="M1702.7 710.8 C1701.1 708.8 1697.9 709.2 1697.1 712.4 L1693.7 723.6 C1692.8 726.8 1690.1 727.6 1687.9 726.2" fill="none" stroke="#a6e890" stroke-width="2.1" stroke-linecap="round"/>
<path d="M1696.9 713.5 L1694.1 722.8" stroke="#a6e890" stroke-width="3.2" stroke-linecap="round"/>
<path d="M1693.3 717.3 H1699.9" stroke="#a6e890" stroke-width="1.5"/>
<text x="1709.6" y="724.1" font-size="14.3" font-weight="bold" font-style="normal" fill="rgba(0,0,0,0.75)" textLength="161.8" lengthAdjust="spacingAndGlyphs" >GetComponentsByClass</text>
<text x="1708.6" y="723.1" font-size="14.3" font-weight="bold" font-style="normal" fill="#f2f2f2" textLength="161.8" lengthAdjust="spacingAndGlyphs" >GetComponentsByClass</text>
<text x="1710.0" y="743.9" font-size="14.6" font-weight="normal" font-style="italic" fill="rgba(0,0,0,0.5)" textLength="91.4" lengthAdjust="spacingAndGlyphs" >Target is Actor</text>
<text x="1709.0" y="742.9" font-size="14.6" font-weight="normal" font-style="italic" fill="#a9b38f" textLength="91.4" lengthAdjust="spacingAndGlyphs" >Target is Actor</text>
<path d="M1699.8 766.3 L1703.3999999999999 769.8 L1699.8 773.3 Z" fill="#0a90d6"/><circle cx="1693.8" cy="769.8" r="4.9" fill="#0e0e0e" stroke="#0a90d6" stroke-width="2.6"/>
<text x="1710.9" y="773.1" font-size="14.2" font-weight="normal" font-style="normal" fill="rgba(0,0,0,0.7)" textLength="40.4" lengthAdjust="spacingAndGlyphs" >Target</text>
<text x="1709.9" y="772.1" font-size="14.2" font-weight="normal" font-style="normal" fill="#ececec" textLength="40.4" lengthAdjust="spacingAndGlyphs" >Target</text>
<rect x="1757.5" y="759.8" width="32.700000000000045" height="19.300000000000068" rx="1" fill="none" stroke="#d8d8d8" stroke-width="1.2"/>
<text x="1773.8" y="774.6" font-size="14" font-weight="normal" font-style="normal" fill="#ececec" text-anchor="middle" >self</text>
<text x="1974.6" y="773.1" font-size="14.2" font-weight="normal" font-style="normal" fill="rgba(0,0,0,0.7)" textLength="80.3" lengthAdjust="spacingAndGlyphs" text-anchor="end" >Return Value</text>
<text x="1973.6" y="772.1" font-size="14.2" font-weight="normal" font-style="normal" fill="#ececec" textLength="80.3" lengthAdjust="spacingAndGlyphs" text-anchor="end" >Return Value</text>
<rect x="1980.00" y="761.00" width="3.5" height="3.6" fill="#00a8f0"/><rect x="1980.00" y="765.50" width="3.5" height="3.6" fill="#00a8f0"/><rect x="1980.00" y="770.00" width="3.5" height="3.6" fill="#00a8f0"/><rect x="1984.35" y="761.00" width="3.5" height="3.6" fill="#00a8f0"/><rect x="1984.35" y="765.50" width="3.5" height="3.6" fill="#00a8f0"/><rect x="1984.35" y="770.00" width="3.5" height="3.6" fill="#00a8f0"/><rect x="1988.70" y="761.00" width="3.5" height="3.6" fill="#00a8f0"/><rect x="1988.70" y="765.50" width="3.5" height="3.6" fill="#00a8f0"/><rect x="1988.70" y="770.00" width="3.5" height="3.6" fill="#00a8f0"/>
<path d="M1699.8 807.5 L1703.3999999999999 811 L1699.8 814.5 Z" fill="#6a0ec8"/><circle cx="1693.8" cy="811" r="4.9" fill="#0e0e0e" stroke="#6a0ec8" stroke-width="2.6"/>
<text x="1710.9" y="806.8" font-size="14.2" font-weight="normal" font-style="normal" fill="rgba(0,0,0,0.7)" textLength="110.9" lengthAdjust="spacingAndGlyphs" >Component Class</text>
<text x="1709.9" y="805.8" font-size="14.2" font-weight="normal" font-style="normal" fill="#ececec" textLength="110.9" lengthAdjust="spacingAndGlyphs" >Component Class</text>
<rect x="1718.3" y="809.3" width="111.40000000000009" height="19.0" rx="3" fill="#2b2c2b" fill-opacity="0.9"/>
<g clip-path="url(#dd1718809)">
<text x="1721.9" y="824.1" font-size="12.5" font-weight="normal" font-style="normal" fill="rgba(0,0,0,0.8)" textLength="95.6" lengthAdjust="spacingAndGlyphs" >Destructible Comp</text>
<text x="1720.9" y="823.1" font-size="12.5" font-weight="normal" font-style="normal" fill="#b8b8b8" textLength="95.6" lengthAdjust="spacingAndGlyphs" >Destructible Comp</text>
</g>
<path d="M1817.0 816.4 H1826.4 L1821.7 822.9 Z" fill="#a8a8a8"/>
<path d="M1835.0 818.8 L1841.0 812.8 V816.3 H1847.0 V821.3 H1841.0 V824.8 Z" fill="#3c3d3c"/>
<circle cx="1859.0" cy="817.8" r="4.6" fill="none" stroke="#3c3d3c" stroke-width="2"/><path d="M1855.8 821.0 L1852.0 824.8" stroke="#3c3d3c" stroke-width="2.4"/>
<g mask="url(#m2052_631)"><rect x="2052.3" y="631.1" width="217.0999999999999" height="155.29999999999995" rx="7" fill="#000" opacity="0.8" filter="url(#nshadow)"/></g>
<rect x="2052.3" y="631.1" width="217.0999999999999" height="155.29999999999995" rx="7" fill="rgba(0,0,0,0.0)"/>
<path d="M2052.3 658 H2269.4 V779.4 Q2269.4 786.4 2262.4 786.4 H2059.3 Q2052.3 786.4 2052.3 779.4 Z" fill="rgba(12,14,12,0.78)"/>
<path d="M2052.3 658 V638.1 Q2052.3 631.1 2059.3 631.1 H2262.4 Q2269.4 631.1 2269.4 638.1 V658 Z" fill="#050505"/>
<g clip-path="url(#hc2052_631)">
<rect x="2052.3" y="631.1" width="217.0999999999999" height="26.899999999999977" fill="#a8a8a8"/>
<rect x="2067.3" y="641.1" width="217.0999999999999" height="9.899999999999977" rx="6" fill="#686868" opacity="0.9" filter="url(#hblur)"/>
<rect x="2052.3" y="631.1" width="217.0999999999999" height="26.899999999999977" fill="url(#hdrShadeXG)"/>
<rect x="2052.3" y="633.1" width="217.0999999999999" height="1.6" fill="#d8d8d8" opacity="0.75"/>
</g>
<rect x="2053.2000000000003" y="632.0" width="215.2999999999999" height="153.49999999999994" rx="6" fill="none" stroke="rgba(0,0,0,0.85)" stroke-width="1.8"/>
<ellipse cx="2071.8" cy="652.2" rx="8" ry="3.2" fill="#000" opacity="0.35"/>
<path d="M2076.89 640.55 A7.6 7.6 0 1 1 2071.53 638.60" fill="none" stroke="#f2f2f2" stroke-width="2.6"/>
<path d="M2070.3 634.0 L2076.4 638.6 L2070.3 643.2 Z" fill="#f2f2f2"/>
<path d="M2068.6000000000004 648.7 V654.2 M2071.2000000000003 648.7 V654.2 M2073.8 648.7 V654.2 M2076.2000000000003 648.7 V654.2" stroke="#cfcfcf" stroke-width="0.9" stroke-dasharray="1.2 0.9" opacity="0.8"/>
<text x="2087.7" y="652.5" font-size="14.3" font-weight="bold" font-style="normal" fill="rgba(0,0,0,0.75)" textLength="92.3" lengthAdjust="spacingAndGlyphs" >For Each Loop</text>
<text x="2086.7" y="651.5" font-size="14.3" font-weight="bold" font-style="normal" fill="#f2f2f2" textLength="92.3" lengthAdjust="spacingAndGlyphs" >For Each Loop</text>
<path d="M2067.3 670.1999999999999 H2072.6 L2078.1 676.9 L2072.6 683.6 H2067.3 Z" fill="#f4f4f4" stroke="#f4f4f4" stroke-width="2.6" stroke-linejoin="round"/>
<text x="2086.5" y="683.0" font-size="14.2" font-weight="normal" font-style="normal" fill="rgba(0,0,0,0.7)" textLength="28.6" lengthAdjust="spacingAndGlyphs" >Exec</text>
<text x="2085.5" y="682.0" font-size="14.2" font-weight="normal" font-style="normal" fill="#ececec" textLength="28.6" lengthAdjust="spacingAndGlyphs" >Exec</text>
<path d="M2244.9 670.1999999999999 H2250.2 L2255.7 676.9 L2250.2 683.6 H2244.9 Z" fill="#f4f4f4" stroke="#f4f4f4" stroke-width="2.6" stroke-linejoin="round"/>
<text x="2238.3" y="683.0" font-size="14.2" font-weight="normal" font-style="normal" fill="rgba(0,0,0,0.7)" textLength="66.0" lengthAdjust="spacingAndGlyphs" text-anchor="end" >Loop Body</text>
<text x="2237.3" y="682.0" font-size="14.2" font-weight="normal" font-style="normal" fill="#ececec" textLength="66.0" lengthAdjust="spacingAndGlyphs" text-anchor="end" >Loop Body</text>
<rect x="2066.00" y="701.30" width="3.5" height="3.6" fill="#00a8f0"/><rect x="2066.00" y="705.80" width="3.5" height="3.6" fill="#00a8f0"/><rect x="2066.00" y="710.30" width="3.5" height="3.6" fill="#00a8f0"/><rect x="2070.35" y="701.30" width="3.5" height="3.6" fill="#00a8f0"/><rect x="2070.35" y="705.80" width="3.5" height="3.6" fill="#00a8f0"/><rect x="2070.35" y="710.30" width="3.5" height="3.6" fill="#00a8f0"/><rect x="2074.70" y="701.30" width="3.5" height="3.6" fill="#00a8f0"/><rect x="2074.70" y="705.80" width="3.5" height="3.6" fill="#00a8f0"/><rect x="2074.70" y="710.30" width="3.5" height="3.6" fill="#00a8f0"/>
<text x="2085.4" y="713.6" font-size="14.2" font-weight="normal" font-style="normal" fill="rgba(0,0,0,0.7)" textLength="33.0" lengthAdjust="spacingAndGlyphs" >Array</text>
<text x="2084.4" y="712.6" font-size="14.2" font-weight="normal" font-style="normal" fill="#ececec" textLength="33.0" lengthAdjust="spacingAndGlyphs" >Array</text>
<circle cx="2246.1" cy="707.6" r="6.2" fill="#00a8f0"/><path d="M2252.1 704.1 L2255.7 707.6 L2252.1 711.1 Z" fill="#00a8f0"/>
<text x="2234.2" y="713.6" font-size="14.2" font-weight="normal" font-style="normal" fill="rgba(0,0,0,0.7)" textLength="87.0" lengthAdjust="spacingAndGlyphs" text-anchor="end" >Array Element</text>
<text x="2233.2" y="712.6" font-size="14.2" font-weight="normal" font-style="normal" fill="#ececec" textLength="87.0" lengthAdjust="spacingAndGlyphs" text-anchor="end" >Array Element</text>
<path d="M2252.1 733.6 L2255.7 737.1 L2252.1 740.6 Z" fill="#1fc99a"/><circle cx="2246.1" cy="737.1" r="4.9" fill="#0e0e0e" stroke="#1fc99a" stroke-width="2.6"/>
<text x="2234.2" y="743.2" font-size="14.2" font-weight="normal" font-style="normal" fill="rgba(0,0,0,0.7)" textLength="70.0" lengthAdjust="spacingAndGlyphs" text-anchor="end" >Array Index</text>
<text x="2233.2" y="742.2" font-size="14.2" font-weight="normal" font-style="normal" fill="#ececec" textLength="70.0" lengthAdjust="spacingAndGlyphs" text-anchor="end" >Array Index</text>
<path d="M2244.9 761.4 H2250.2 L2255.7 768.1 L2250.2 774.8000000000001 H2244.9 Z" fill="#f4f4f4" stroke="#f4f4f4" stroke-width="2.6" stroke-linejoin="round"/>
<text x="2238.3" y="774.2" font-size="14.2" font-weight="normal" font-style="normal" fill="rgba(0,0,0,0.7)" textLength="67.0" lengthAdjust="spacingAndGlyphs" text-anchor="end" >Completed</text>
<text x="2237.3" y="773.2" font-size="14.2" font-weight="normal" font-style="normal" fill="#ececec" textLength="67.0" lengthAdjust="spacingAndGlyphs" text-anchor="end" >Completed</text>
<g mask="url(#m2340_739)"><rect x="2340" y="739.1" width="239.4000000000001" height="82.19999999999993" rx="7" fill="#000" opacity="0.8" filter="url(#nshadow)"/></g>
<rect x="2340" y="739.1" width="239.4000000000001" height="82.19999999999993" rx="7" fill="rgba(0,0,0,0.0)"/>
<path d="M2340 785 H2579.4 V814.3 Q2579.4 821.3 2572.4 821.3 H2347 Q2340 821.3 2340 814.3 Z" fill="rgba(12,14,12,0.78)"/>
<path d="M2340 785 V746.1 Q2340 739.1 2347 739.1 H2572.4 Q2579.4 739.1 2579.4 746.1 V785 Z" fill="#050505"/>
<g clip-path="url(#hc2340_739)">
<rect x="2340" y="739.1" width="239.4000000000001" height="45.89999999999998" fill="#6c9a64"/>
<rect x="2355" y="749.1" width="239.4000000000001" height="28.899999999999977" rx="6" fill="#2e4530" opacity="0.9" filter="url(#hblur)"/>
<rect x="2340" y="739.1" width="239.4000000000001" height="45.89999999999998" fill="url(#hdrShadeXGn)"/>
<rect x="2340" y="741.1" width="239.4000000000001" height="1.6" fill="#94cc88" opacity="0.75"/>
</g>
<rect x="2340.9" y="740.0" width="237.60000000000008" height="80.39999999999993" rx="6" fill="none" stroke="rgba(0,0,0,0.85)" stroke-width="1.8"/>
<path d="M2369.2 746.8 C2367.6 744.8 2364.4 745.2 2363.6 748.4 L2360.2 759.6 C2359.3 762.8 2356.6 763.6 2354.4 762.2" fill="none" stroke="#a6e890" stroke-width="2.1" stroke-linecap="round"/>
<path d="M2363.4 749.5 L2360.6 758.8" stroke="#a6e890" stroke-width="3.2" stroke-linecap="round"/>
<path d="M2359.8 753.3 H2366.4" stroke="#a6e890" stroke-width="1.5"/>
<text x="2375.4" y="759.9" font-size="14.3" font-weight="bold" font-style="normal" fill="rgba(0,0,0,0.75)" textLength="117.8" lengthAdjust="spacingAndGlyphs" >GetWorldLocation</text>
<text x="2374.4" y="758.9" font-size="14.3" font-weight="bold" font-style="normal" fill="#f2f2f2" textLength="117.8" lengthAdjust="spacingAndGlyphs" >GetWorldLocation</text>
<text x="2376.0" y="779.3" font-size="14.6" font-weight="normal" font-style="italic" fill="rgba(0,0,0,0.5)" textLength="170.0" lengthAdjust="spacingAndGlyphs" >Target is Scene Component</text>
<text x="2375.0" y="778.3" font-size="14.6" font-weight="normal" font-style="italic" fill="#a9b38f" textLength="170.0" lengthAdjust="spacingAndGlyphs" >Target is Scene Component</text>
<circle cx="2360" cy="803.3" r="6.2" fill="#00a8f0"/><path d="M2366.0 799.8 L2369.6 803.3 L2366.0 806.8 Z" fill="#00a8f0"/>
<text x="2377.0" y="809.4" font-size="14.2" font-weight="normal" font-style="normal" fill="rgba(0,0,0,0.7)" textLength="39.7" lengthAdjust="spacingAndGlyphs" >Target</text>
<text x="2376.0" y="808.4" font-size="14.2" font-weight="normal" font-style="normal" fill="#ececec" textLength="39.7" lengthAdjust="spacingAndGlyphs" >Target</text>
<circle cx="2555.6" cy="803.3" r="6.2" fill="#f5c518"/><path d="M2561.6 799.8 L2565.2 803.3 L2561.6 806.8 Z" fill="#f5c518"/>
<text x="2544.9" y="809.4" font-size="14.2" font-weight="normal" font-style="normal" fill="rgba(0,0,0,0.7)" textLength="80.3" lengthAdjust="spacingAndGlyphs" text-anchor="end" >Return Value</text>
<text x="2543.9" y="808.4" font-size="14.2" font-weight="normal" font-style="normal" fill="#ececec" textLength="80.3" lengthAdjust="spacingAndGlyphs" text-anchor="end" >Return Value</text>
<g mask="url(#m2628_613)"><rect x="2628.1" y="613.4" width="278.0" height="281.30000000000007" rx="7" fill="#000" opacity="0.8" filter="url(#nshadow)"/></g>
<rect x="2628.1" y="613.4" width="278.0" height="281.30000000000007" rx="7" fill="rgba(0,0,0,0.0)"/>
<path d="M2628.1 659.1 H2906.1 V887.7 Q2906.1 894.7 2899.1 894.7 H2635.1 Q2628.1 894.7 2628.1 887.7 Z" fill="rgba(12,14,12,0.78)"/>
<path d="M2628.1 659.1 V620.4 Q2628.1 613.4 2635.1 613.4 H2899.1 Q2906.1 613.4 2906.1 620.4 V659.1 Z" fill="#050505"/>
<g clip-path="url(#hc2628_613)">
<rect x="2628.1" y="613.4" width="278.0" height="45.700000000000045" fill="#5286ab"/>
<rect x="2643.1" y="623.4" width="278.0" height="28.700000000000045" rx="6" fill="#233a4c" opacity="0.9" filter="url(#hblur)"/>
<rect x="2628.1" y="613.4" width="278.0" height="45.700000000000045" fill="url(#hdrShadeXB)"/>
<rect x="2628.1" y="615.4" width="278.0" height="1.6" fill="#74b0dc" opacity="0.75"/>
</g>
<rect x="2629.0" y="614.3" width="276.2" height="279.50000000000006" rx="6" fill="none" stroke="rgba(0,0,0,0.85)" stroke-width="1.8"/>
<path d="M2657.2 620.8 C2655.6 618.8 2652.4 619.2 2651.6 622.4 L2648.2 633.6 C2647.3 636.8 2644.6 637.6 2642.4 636.2" fill="none" stroke="#6cb8ee" stroke-width="2.1" stroke-linecap="round"/>
<path d="M2651.4 623.5 L2648.6 632.8" stroke="#6cb8ee" stroke-width="3.2" stroke-linecap="round"/>
<path d="M2647.8 627.3 H2654.4" stroke="#6cb8ee" stroke-width="1.5"/>
<text x="2663.5" y="634.0" font-size="14.3" font-weight="bold" font-style="normal" fill="rgba(0,0,0,0.75)" textLength="145.9" lengthAdjust="spacingAndGlyphs" >Apply Radius Damage</text>
<text x="2662.5" y="633.0" font-size="14.3" font-weight="bold" font-style="normal" fill="#f2f2f2" textLength="145.9" lengthAdjust="spacingAndGlyphs" >Apply Radius Damage</text>
<text x="2664.0" y="653.5" font-size="14.6" font-weight="normal" font-style="italic" fill="rgba(0,0,0,0.5)" textLength="209.0" lengthAdjust="spacingAndGlyphs" >Target is Destructible Component</text>
<text x="2663.0" y="652.5" font-size="14.6" font-weight="normal" font-style="italic" fill="#a9b38f" textLength="209.0" lengthAdjust="spacingAndGlyphs" >Target is Destructible Component</text>
<path d="M2643.3 671.1999999999999 H2648.6 L2654.1 677.9 L2648.6 684.6 H2643.3 Z" fill="#f4f4f4" stroke="#f4f4f4" stroke-width="2.6" stroke-linejoin="round"/>
<path d="M2880.8 671.1999999999999 H2886.1 L2891.6 677.9 L2886.1 684.6 H2880.8 Z" fill="none" stroke="#f0f0f0" stroke-width="1.5" stroke-linejoin="round"/>
<circle cx="2648" cy="708.8" r="6.2" fill="#00a8f0"/><path d="M2654.0 705.3 L2657.6 708.8 L2654.0 712.3 Z" fill="#00a8f0"/>
<text x="2665.6" y="714.7" font-size="14.2" font-weight="normal" font-style="normal" fill="rgba(0,0,0,0.7)" textLength="39.7" lengthAdjust="spacingAndGlyphs" >Target</text>
<text x="2664.6" y="713.7" font-size="14.2" font-weight="normal" font-style="normal" fill="#ececec" textLength="39.7" lengthAdjust="spacingAndGlyphs" >Target</text>
<path d="M2654.0 737.2 L2657.6 740.7 L2654.0 744.2 Z" fill="#7ad63a"/><circle cx="2648" cy="740.7" r="4.9" fill="#0e0e0e" stroke="#7ad63a" stroke-width="2.6"/>
<text x="2665.6" y="743.8" font-size="14.2" font-weight="normal" font-style="normal" fill="rgba(0,0,0,0.7)" textLength="85.5" lengthAdjust="spacingAndGlyphs" >Base Damage</text>
<text x="2664.6" y="742.8" font-size="14.2" font-weight="normal" font-style="normal" fill="#ececec" textLength="85.5" lengthAdjust="spacingAndGlyphs" >Base Damage</text>
<rect x="2756.8" y="730.7" width="45.399999999999636" height="19.199999999999932" rx="1" fill="none" stroke="#d8d8d8" stroke-width="1.2"/>
<text x="2779.5" y="745.4" font-size="14" font-weight="normal" font-style="normal" fill="#ececec" text-anchor="middle" >100.0</text>
<circle cx="2648" cy="772.7" r="6.2" fill="#f5c518"/><path d="M2654.0 769.2 L2657.6 772.7 L2654.0 776.2 Z" fill="#f5c518"/>
<text x="2665.6" y="777.8" font-size="14.2" font-weight="normal" font-style="normal" fill="rgba(0,0,0,0.7)" textLength="69.0" lengthAdjust="spacingAndGlyphs" >Hurt Origin</text>
<text x="2664.6" y="776.8" font-size="14.2" font-weight="normal" font-style="normal" fill="#ececec" textLength="69.0" lengthAdjust="spacingAndGlyphs" >Hurt Origin</text>
<path d="M2654.0 800.1 L2657.6 803.6 L2654.0 807.1 Z" fill="#7ad63a"/><circle cx="2648" cy="803.6" r="4.9" fill="#0e0e0e" stroke="#7ad63a" stroke-width="2.6"/>
<text x="2665.6" y="807.7" font-size="14.2" font-weight="normal" font-style="normal" fill="rgba(0,0,0,0.7)" textLength="98.3" lengthAdjust="spacingAndGlyphs" >Damage Radius</text>
<text x="2664.6" y="806.7" font-size="14.2" font-weight="normal" font-style="normal" fill="#ececec" textLength="98.3" lengthAdjust="spacingAndGlyphs" >Damage Radius</text>
<rect x="2769.8" y="794.6" width="53.399999999999636" height="18.600000000000023" rx="1" fill="none" stroke="#d8d8d8" stroke-width="1.2"/>
<text x="2796.5" y="808.7" font-size="14" font-weight="normal" font-style="normal" fill="#ececec" text-anchor="middle" >1000.0</text>
<path d="M2654.0 834.1 L2657.6 837.6 L2654.0 841.1 Z" fill="#7ad63a"/><circle cx="2648" cy="837.6" r="4.9" fill="#0e0e0e" stroke="#7ad63a" stroke-width="2.6"/>
<text x="2665.6" y="842.1" font-size="14.2" font-weight="normal" font-style="normal" fill="rgba(0,0,0,0.7)" textLength="107.2" lengthAdjust="spacingAndGlyphs" >Impulse Strength</text>
<text x="2664.6" y="841.1" font-size="14.2" font-weight="normal" font-style="normal" fill="#ececec" textLength="107.2" lengthAdjust="spacingAndGlyphs" >Impulse Strength</text>
<rect x="2778.8" y="828.8" width="37.399999999999636" height="18.0" rx="1" fill="none" stroke="#d8d8d8" stroke-width="1.2"/>
<text x="2797.5" y="842.3" font-size="14" font-weight="normal" font-style="normal" fill="#ececec" text-anchor="middle" >10.0</text>
<path d="M2654.0 869.1 L2657.6 872.6 L2654.0 876.1 Z" fill="#880b0b"/><circle cx="2648" cy="872.6" r="4.9" fill="#0e0e0e" stroke="#880b0b" stroke-width="2.6"/>
<text x="2665.6" y="876.1" font-size="14.2" font-weight="normal" font-style="normal" fill="rgba(0,0,0,0.7)" textLength="78.3" lengthAdjust="spacingAndGlyphs" >Full Damage</text>
<text x="2664.6" y="875.1" font-size="14.2" font-weight="normal" font-style="normal" fill="#ececec" textLength="78.3" lengthAdjust="spacingAndGlyphs" >Full Damage</text>
<rect x="2752.2999999999997" y="864.9" width="15.500000000000274" height="15.3" rx="2.5" fill="#505050" stroke="#c8c8c8" stroke-width="2.2"/>
<path d="M2755.3999999999996 872.9 L2758.634 877.0999999999999 L2765.3 868.4" fill="none" stroke="#c4c4c4" stroke-width="3"/>
<g mask="url(#m1674_1261)"><rect x="1670.8" y="1257.6" width="338.4000000000001" height="142.5" rx="10.5" fill="#000" opacity="0.8" filter="url(#nshadow)"/></g>
<rect x="1672.55" y="1259.35" width="334.9000000000001" height="139.0" rx="8.5" fill="none" stroke="url(#selOrange)" stroke-width="3.6"/>
<rect x="1674.3" y="1261.1" width="331.4000000000001" height="135.5" rx="7" fill="rgba(0,0,0,0.0)"/>
<path d="M1674.3 1306.6 H2005.7 V1389.6 Q2005.7 1396.6 1998.7 1396.6 H1681.3 Q1674.3 1396.6 1674.3 1389.6 Z" fill="rgba(12,14,12,0.78)"/>
<rect x="1675.3" y="1384.6" width="329.4000000000001" height="11" rx="6" fill="url(#selInner)"/>
<path d="M1674.3 1306.6 V1268.1 Q1674.3 1261.1 1681.3 1261.1 H1998.7 Q2005.7 1261.1 2005.7 1268.1 V1306.6 Z" fill="#050505"/>
<g clip-path="url(#hc1674_1261)">
<rect x="1674.3" y="1261.1" width="331.4000000000001" height="45.5" fill="#6c9a64"/>
<rect x="1689.3" y="1271.1" width="331.4000000000001" height="28.5" rx="6" fill="#2e4530" opacity="0.9" filter="url(#hblur)"/>
<rect x="1674.3" y="1261.1" width="331.4000000000001" height="45.5" fill="url(#hdrShadeXGn)"/>
<rect x="1674.3" y="1263.1" width="331.4000000000001" height="1.6" fill="#94cc88" opacity="0.75"/>
</g>
<rect x="1675.2" y="1262.0" width="329.6000000000001" height="133.7" rx="6" fill="none" stroke="rgba(38,22,2,0.95)" stroke-width="1.8"/>
<path d="M1702.7 1268.8 C1701.1 1266.8 1697.9 1267.2 1697.1 1270.4 L1693.7 1281.6 C1692.8 1284.8 1690.1 1285.6 1687.9 1284.2" fill="none" stroke="#a6e890" stroke-width="2.1" stroke-linecap="round"/>
<path d="M1696.9 1271.5 L1694.1 1280.8" stroke="#a6e890" stroke-width="3.2" stroke-linecap="round"/>
<path d="M1693.3 1275.3 H1699.9" stroke="#a6e890" stroke-width="1.5"/>
<text x="1709.6" y="1282.1" font-size="14.3" font-weight="bold" font-style="normal" fill="rgba(0,0,0,0.75)" textLength="161.8" lengthAdjust="spacingAndGlyphs" >GetComponentsByClass</text>
<text x="1708.6" y="1281.1" font-size="14.3" font-weight="bold" font-style="normal" fill="#f2f2f2" textLength="161.8" lengthAdjust="spacingAndGlyphs" >GetComponentsByClass</text>
<text x="1710.0" y="1301.9" font-size="14.6" font-weight="normal" font-style="italic" fill="rgba(0,0,0,0.5)" textLength="91.4" lengthAdjust="spacingAndGlyphs" >Target is Actor</text>
<text x="1709.0" y="1300.9" font-size="14.6" font-weight="normal" font-style="italic" fill="#a9b38f" textLength="91.4" lengthAdjust="spacingAndGlyphs" >Target is Actor</text>
<path d="M1699.8 1324.3 L1703.3999999999999 1327.8 L1699.8 1331.3 Z" fill="#0a90d6"/><circle cx="1693.8" cy="1327.8" r="4.9" fill="#0e0e0e" stroke="#0a90d6" stroke-width="2.6"/>
<text x="1710.9" y="1331.1" font-size="14.2" font-weight="normal" font-style="normal" fill="rgba(0,0,0,0.7)" textLength="40.4" lengthAdjust="spacingAndGlyphs" >Target</text>
<text x="1709.9" y="1330.1" font-size="14.2" font-weight="normal" font-style="normal" fill="#ececec" textLength="40.4" lengthAdjust="spacingAndGlyphs" >Target</text>
<rect x="1757.5" y="1317.8" width="32.700000000000045" height="19.299999999999955" rx="1" fill="none" stroke="#d8d8d8" stroke-width="1.2"/>
<text x="1773.8" y="1332.6" font-size="14" font-weight="normal" font-style="normal" fill="#ececec" text-anchor="middle" >self</text>
<text x="1974.6" y="1331.1" font-size="14.2" font-weight="normal" font-style="normal" fill="rgba(0,0,0,0.7)" textLength="80.3" lengthAdjust="spacingAndGlyphs" text-anchor="end" >Return Value</text>
<text x="1973.6" y="1330.1" font-size="14.2" font-weight="normal" font-style="normal" fill="#ececec" textLength="80.3" lengthAdjust="spacingAndGlyphs" text-anchor="end" >Return Value</text>
<rect x="1980.00" y="1319.00" width="3.5" height="3.6" fill="#00a8f0"/><rect x="1980.00" y="1323.50" width="3.5" height="3.6" fill="#00a8f0"/><rect x="1980.00" y="1328.00" width="3.5" height="3.6" fill="#00a8f0"/><rect x="1984.35" y="1319.00" width="3.5" height="3.6" fill="#00a8f0"/><rect x="1984.35" y="1323.50" width="3.5" height="3.6" fill="#00a8f0"/><rect x="1984.35" y="1328.00" width="3.5" height="3.6" fill="#00a8f0"/><rect x="1988.70" y="1319.00" width="3.5" height="3.6" fill="#00a8f0"/><rect x="1988.70" y="1323.50" width="3.5" height="3.6" fill="#00a8f0"/><rect x="1988.70" y="1328.00" width="3.5" height="3.6" fill="#00a8f0"/>
<path d="M1699.8 1365.5 L1703.3999999999999 1369 L1699.8 1372.5 Z" fill="#6a0ec8"/><circle cx="1693.8" cy="1369" r="4.9" fill="#0e0e0e" stroke="#6a0ec8" stroke-width="2.6"/>
<text x="1710.9" y="1364.8" font-size="14.2" font-weight="normal" font-style="normal" fill="rgba(0,0,0,0.7)" textLength="110.9" lengthAdjust="spacingAndGlyphs" >Component Class</text>
<text x="1709.9" y="1363.8" font-size="14.2" font-weight="normal" font-style="normal" fill="#ececec" textLength="110.9" lengthAdjust="spacingAndGlyphs" >Component Class</text>
<rect x="1718.3" y="1367.3" width="111.40000000000009" height="19.0" rx="3" fill="#2b2c2b" fill-opacity="0.9"/>
<g clip-path="url(#dd17181367)">
<text x="1721.9" y="1382.1" font-size="12.5" font-weight="normal" font-style="normal" fill="rgba(0,0,0,0.8)" textLength="95.0" lengthAdjust="spacingAndGlyphs" >Static Mesh Comp</text>
<text x="1720.9" y="1381.1" font-size="12.5" font-weight="normal" font-style="normal" fill="#b8b8b8" textLength="95.0" lengthAdjust="spacingAndGlyphs" >Static Mesh Comp</text>
</g>
<path d="M1817.0 1374.3999999999999 H1826.4 L1821.7 1380.8999999999999 Z" fill="#a8a8a8"/>
<path d="M1835.0 1376.8 L1841.0 1370.8 V1374.3 H1847.0 V1379.3 H1841.0 V1382.8 Z" fill="#3c3d3c"/>
<circle cx="1859.0" cy="1375.8" r="4.6" fill="none" stroke="#3c3d3c" stroke-width="2"/><path d="M1855.8 1379.0 L1852.0 1382.8" stroke="#3c3d3c" stroke-width="2.4"/>
<g mask="url(#m2106_1207)"><rect x="2103.0" y="1203.8000000000002" width="224.0999999999999" height="162.29999999999973" rx="10.5" fill="#000" opacity="0.8" filter="url(#nshadow)"/></g>
<rect x="2104.75" y="1205.5500000000002" width="220.5999999999999" height="158.79999999999973" rx="8.5" fill="none" stroke="url(#selOrange)" stroke-width="3.6"/>
<rect x="2106.5" y="1207.3000000000002" width="217.0999999999999" height="155.29999999999973" rx="7" fill="rgba(0,0,0,0.0)"/>
<path d="M2106.5 1234.2 H2323.6 V1355.6 Q2323.6 1362.6 2316.6 1362.6 H2113.5 Q2106.5 1362.6 2106.5 1355.6 Z" fill="rgba(12,14,12,0.78)"/>
<rect x="2107.5" y="1350.6" width="215.0999999999999" height="11" rx="6" fill="url(#selInner)"/>
<path d="M2106.5 1234.2 V1214.3000000000002 Q2106.5 1207.3000000000002 2113.5 1207.3000000000002 H2316.6 Q2323.6 1207.3000000000002 2323.6 1214.3000000000002 V1234.2 Z" fill="#050505"/>
<g clip-path="url(#hc2106_1207)">
<rect x="2106.5" y="1207.3000000000002" width="217.0999999999999" height="26.899999999999864" fill="#a8a8a8"/>
<rect x="2121.5" y="1217.3000000000002" width="217.0999999999999" height="9.899999999999864" rx="6" fill="#686868" opacity="0.9" filter="url(#hblur)"/>
<rect x="2106.5" y="1207.3000000000002" width="217.0999999999999" height="26.899999999999864" fill="url(#hdrShadeXG)"/>
<rect x="2106.5" y="1209.3000000000002" width="217.0999999999999" height="1.6" fill="#d8d8d8" opacity="0.75"/>
</g>
<rect x="2107.4" y="1208.2000000000003" width="215.2999999999999" height="153.49999999999972" rx="6" fill="none" stroke="rgba(38,22,2,0.95)" stroke-width="1.8"/>
<ellipse cx="2126.0" cy="1228.4" rx="8" ry="3.2" fill="#000" opacity="0.35"/>
<path d="M2131.09 1216.75 A7.6 7.6 0 1 1 2125.73 1214.80" fill="none" stroke="#f2f2f2" stroke-width="2.6"/>
<path d="M2124.5 1210.2000000000003 L2130.6 1214.8000000000002 L2124.5 1219.4 Z" fill="#f2f2f2"/>
<path d="M2122.8 1224.9 V1230.4 M2125.4 1224.9 V1230.4 M2128.0 1224.9 V1230.4 M2130.4 1224.9 V1230.4" stroke="#cfcfcf" stroke-width="0.9" stroke-dasharray="1.2 0.9" opacity="0.8"/>
<text x="2141.9" y="1228.7" font-size="14.3" font-weight="bold" font-style="normal" fill="rgba(0,0,0,0.75)" textLength="92.3" lengthAdjust="spacingAndGlyphs" >For Each Loop</text>
<text x="2140.9" y="1227.7" font-size="14.3" font-weight="bold" font-style="normal" fill="#f2f2f2" textLength="92.3" lengthAdjust="spacingAndGlyphs" >For Each Loop</text>
<path d="M2121.5 1246.3999999999999 H2126.7999999999997 L2132.2999999999997 1253.1 L2126.7999999999997 1259.8 H2121.5 Z" fill="#f4f4f4" stroke="#f4f4f4" stroke-width="2.6" stroke-linejoin="round"/>
<text x="2140.7" y="1259.2" font-size="14.2" font-weight="normal" font-style="normal" fill="rgba(0,0,0,0.7)" textLength="28.6" lengthAdjust="spacingAndGlyphs" >Exec</text>
<text x="2139.7" y="1258.2" font-size="14.2" font-weight="normal" font-style="normal" fill="#ececec" textLength="28.6" lengthAdjust="spacingAndGlyphs" >Exec</text>
<path d="M2299.1 1246.3999999999999 H2304.3999999999996 L2309.8999999999996 1253.1 L2304.3999999999996 1259.8 H2299.1 Z" fill="#f4f4f4" stroke="#f4f4f4" stroke-width="2.6" stroke-linejoin="round"/>
<text x="2292.5" y="1259.2" font-size="14.2" font-weight="normal" font-style="normal" fill="rgba(0,0,0,0.7)" textLength="66.0" lengthAdjust="spacingAndGlyphs" text-anchor="end" >Loop Body</text>
<text x="2291.5" y="1258.2" font-size="14.2" font-weight="normal" font-style="normal" fill="#ececec" textLength="66.0" lengthAdjust="spacingAndGlyphs" text-anchor="end" >Loop Body</text>
<rect x="2120.20" y="1277.50" width="3.5" height="3.6" fill="#00a8f0"/><rect x="2120.20" y="1282.00" width="3.5" height="3.6" fill="#00a8f0"/><rect x="2120.20" y="1286.50" width="3.5" height="3.6" fill="#00a8f0"/><rect x="2124.55" y="1277.50" width="3.5" height="3.6" fill="#00a8f0"/><rect x="2124.55" y="1282.00" width="3.5" height="3.6" fill="#00a8f0"/><rect x="2124.55" y="1286.50" width="3.5" height="3.6" fill="#00a8f0"/><rect x="2128.90" y="1277.50" width="3.5" height="3.6" fill="#00a8f0"/><rect x="2128.90" y="1282.00" width="3.5" height="3.6" fill="#00a8f0"/><rect x="2128.90" y="1286.50" width="3.5" height="3.6" fill="#00a8f0"/>
<text x="2139.6" y="1289.8" font-size="14.2" font-weight="normal" font-style="normal" fill="rgba(0,0,0,0.7)" textLength="33.0" lengthAdjust="spacingAndGlyphs" >Array</text>
<text x="2138.6" y="1288.8" font-size="14.2" font-weight="normal" font-style="normal" fill="#ececec" textLength="33.0" lengthAdjust="spacingAndGlyphs" >Array</text>
<circle cx="2300.2999999999997" cy="1283.8000000000002" r="6.2" fill="#00a8f0"/><path d="M2306.2999999999997 1280.3000000000002 L2309.8999999999996 1283.8000000000002 L2306.2999999999997 1287.3000000000002 Z" fill="#00a8f0"/>
<text x="2288.4" y="1289.8" font-size="14.2" font-weight="normal" font-style="normal" fill="rgba(0,0,0,0.7)" textLength="87.0" lengthAdjust="spacingAndGlyphs" text-anchor="end" >Array Element</text>
<text x="2287.4" y="1288.8" font-size="14.2" font-weight="normal" font-style="normal" fill="#ececec" textLength="87.0" lengthAdjust="spacingAndGlyphs" text-anchor="end" >Array Element</text>
<path d="M2306.2999999999997 1309.8000000000002 L2309.8999999999996 1313.3000000000002 L2306.2999999999997 1316.8000000000002 Z" fill="#1fc99a"/><circle cx="2300.2999999999997" cy="1313.3000000000002" r="4.9" fill="#0e0e0e" stroke="#1fc99a" stroke-width="2.6"/>
<text x="2288.4" y="1319.4" font-size="14.2" font-weight="normal" font-style="normal" fill="rgba(0,0,0,0.7)" textLength="70.0" lengthAdjust="spacingAndGlyphs" text-anchor="end" >Array Index</text>
<text x="2287.4" y="1318.4" font-size="14.2" font-weight="normal" font-style="normal" fill="#ececec" textLength="70.0" lengthAdjust="spacingAndGlyphs" text-anchor="end" >Array Index</text>
<path d="M2299.1 1337.6000000000001 H2304.3999999999996 L2309.8999999999996 1344.3000000000002 L2304.3999999999996 1351.0000000000002 H2299.1 Z" fill="none" stroke="#f0f0f0" stroke-width="1.5" stroke-linejoin="round"/>
<text x="2292.5" y="1350.4" font-size="14.2" font-weight="normal" font-style="normal" fill="rgba(0,0,0,0.7)" textLength="67.0" lengthAdjust="spacingAndGlyphs" text-anchor="end" >Completed</text>
<text x="2291.5" y="1349.4" font-size="14.2" font-weight="normal" font-style="normal" fill="#ececec" textLength="67.0" lengthAdjust="spacingAndGlyphs" text-anchor="end" >Completed</text>
<g mask="url(#m2395_1189)"><rect x="2391.5" y="1186.0" width="313.0" height="168.5" rx="10.5" fill="#000" opacity="0.8" filter="url(#nshadow)"/></g>
<rect x="2393.25" y="1187.75" width="309.5" height="165.0" rx="8.5" fill="none" stroke="url(#selOrange)" stroke-width="3.6"/>
<rect x="2395" y="1189.5" width="306" height="161.5" rx="7" fill="rgba(0,0,0,0.0)"/>
<path d="M2395 1235 H2701 V1344 Q2701 1351 2694 1351 H2402 Q2395 1351 2395 1344 Z" fill="rgba(12,14,12,0.78)"/>
<rect x="2396" y="1339" width="304" height="11" rx="6" fill="url(#selInner)"/>
<path d="M2395 1235 V1196.5 Q2395 1189.5 2402 1189.5 H2694 Q2701 1189.5 2701 1196.5 V1235 Z" fill="#050505"/>
<g clip-path="url(#hc2395_1189)">
<rect x="2395" y="1189.5" width="306" height="45.5" fill="#5286ab"/>
<rect x="2410" y="1199.5" width="306" height="28.5" rx="6" fill="#233a4c" opacity="0.9" filter="url(#hblur)"/>
<rect x="2395" y="1189.5" width="306" height="45.5" fill="url(#hdrShadeXB)"/>
<rect x="2395" y="1191.5" width="306" height="1.6" fill="#74b0dc" opacity="0.75"/>
</g>
<rect x="2395.9" y="1190.4" width="304.2" height="159.7" rx="6" fill="none" stroke="rgba(38,22,2,0.95)" stroke-width="1.8"/>
<path d="M2424.2 1196.8 C2422.6 1194.8 2419.4 1195.2 2418.6 1198.4 L2415.2 1209.6 C2414.3 1212.8 2411.6 1213.6 2409.4 1212.2" fill="none" stroke="#6cb8ee" stroke-width="2.1" stroke-linecap="round"/>
<path d="M2418.4 1199.5 L2415.6 1208.8" stroke="#6cb8ee" stroke-width="3.2" stroke-linecap="round"/>
<path d="M2414.8 1203.3 H2421.4" stroke="#6cb8ee" stroke-width="1.5"/>
<text x="2429.3" y="1209.9" font-size="14.3" font-weight="bold" font-style="normal" fill="rgba(0,0,0,0.75)" textLength="106.0" lengthAdjust="spacingAndGlyphs" >Set Static Mesh</text>
<text x="2428.3" y="1208.9" font-size="14.3" font-weight="bold" font-style="normal" fill="#f2f2f2" textLength="106.0" lengthAdjust="spacingAndGlyphs" >Set Static Mesh</text>
<text x="2429.3" y="1230.0" font-size="14.6" font-weight="normal" font-style="italic" fill="rgba(0,0,0,0.5)" textLength="208.0" lengthAdjust="spacingAndGlyphs" >Target is Static Mesh Component</text>
<text x="2428.3" y="1229.0" font-size="14.6" font-weight="normal" font-style="italic" fill="#a9b38f" textLength="208.0" lengthAdjust="spacingAndGlyphs" >Target is Static Mesh Component</text>
<path d="M2409.5 1247.3 H2414.7999999999997 L2420.2999999999997 1254 L2414.7999999999997 1260.7 H2409.5 Z" fill="#f4f4f4" stroke="#f4f4f4" stroke-width="2.6" stroke-linejoin="round"/>
<path d="M2676.6000000000004 1247.3 H2681.9 L2687.4 1254 L2681.9 1260.7 H2676.6000000000004 Z" fill="none" stroke="#f0f0f0" stroke-width="1.5" stroke-linejoin="round"/>
<circle cx="2414.2" cy="1285" r="6.2" fill="#00a8f0"/><path d="M2420.2 1281.5 L2423.7999999999997 1285 L2420.2 1288.5 Z" fill="#00a8f0"/>
<text x="2431.4" y="1291.0" font-size="14.2" font-weight="normal" font-style="normal" fill="rgba(0,0,0,0.7)" textLength="39.7" lengthAdjust="spacingAndGlyphs" >Target</text>
<text x="2430.4" y="1290.0" font-size="14.2" font-weight="normal" font-style="normal" fill="#ececec" textLength="39.7" lengthAdjust="spacingAndGlyphs" >Target</text>
<path d="M2683.6 1281.5 L2687.2 1285 L2683.6 1288.5 Z" fill="#880b0b"/><circle cx="2677.6" cy="1285" r="4.9" fill="#0e0e0e" stroke="#880b0b" stroke-width="2.6"/>
<text x="2666.8" y="1291.0" font-size="14.2" font-weight="normal" font-style="normal" fill="rgba(0,0,0,0.7)" textLength="80.3" lengthAdjust="spacingAndGlyphs" text-anchor="end" >Return Value</text>
<text x="2665.8" y="1290.0" font-size="14.2" font-weight="normal" font-style="normal" fill="#ececec" textLength="80.3" lengthAdjust="spacingAndGlyphs" text-anchor="end" >Return Value</text>
<path d="M2420.2 1320.4 L2423.7999999999997 1323.9 L2420.2 1327.4 Z" fill="#0a90d6"/><circle cx="2414.2" cy="1323.9" r="4.9" fill="#0e0e0e" stroke="#0a90d6" stroke-width="2.6"/>
<text x="2431.4" y="1319.6" font-size="14.2" font-weight="normal" font-style="normal" fill="rgba(0,0,0,0.7)" textLength="64.0" lengthAdjust="spacingAndGlyphs" >New Mesh</text>
<text x="2430.4" y="1318.6" font-size="14.2" font-weight="normal" font-style="normal" fill="#ececec" textLength="64.0" lengthAdjust="spacingAndGlyphs" >New Mesh</text>
<rect x="2438" y="1322" width="83.40000000000009" height="19.5" rx="3" fill="#2b2c2b" fill-opacity="0.9"/>
<g clip-path="url(#dd24381322)">
<text x="2441.6" y="1336.8" font-size="12.5" font-weight="normal" font-style="normal" fill="rgba(0,0,0,0.8)" textLength="64.0" lengthAdjust="spacingAndGlyphs" >Select Asset</text>
<text x="2440.6" y="1335.8" font-size="12.5" font-weight="normal" font-style="normal" fill="#b8b8b8" textLength="64.0" lengthAdjust="spacingAndGlyphs" >Select Asset</text>
</g>
<path d="M2508.7000000000003 1329.1 H2518.1000000000004 L2513.4 1335.6 Z" fill="#a8a8a8"/>
<path d="M2526.7000000000003 1331.75 L2532.7000000000003 1325.75 V1329.25 H2538.7000000000003 V1334.25 H2532.7000000000003 V1337.75 Z" fill="#3c3d3c"/>
<circle cx="2550.7000000000003" cy="1330.75" r="4.6" fill="none" stroke="#3c3d3c" stroke-width="2"/><path d="M2547.5000000000005 1333.95 L2543.7000000000003 1337.75" stroke="#3c3d3c" stroke-width="2.4"/>
<rect x="0" y="0" width="2970" height="60" fill="#000" fill-opacity="0.56"/>
<rect x="4" y="0" width="75" height="16" fill="#ffffff" fill-opacity="0.07"/>
<path d="M61 12 L72 1 M65 12 L75 2 M69 12 L75 6" stroke="#5a5a5a" stroke-width="1"/>
<polygon points="29.80,14.00 33.86,22.72 43.40,23.88 36.36,30.43 38.21,39.87 29.80,35.20 21.39,39.87 23.24,30.43 16.20,23.88 25.74,22.72" fill="none" stroke="#d2d2d2" stroke-width="1.7" stroke-linejoin="miter"/>
<rect x="54" y="1" width="1.2" height="54" fill="#7a7a7a"/>
<rect x="184.6" y="1" width="1.4" height="54" fill="#7a7a7a"/>
<path d="M76 36 L89 45 V37 H98.5 V24 Z" fill="#000" opacity="0.35"/>
<path d="M73.5 26.5 L88 9.5 V20 H97.5 V33.5 H88.5 V43 Z" fill="url(#tbArrowL)"/>
<path d="M136.5 19.5 H146.5 V9.5 L161.5 26.5 L147 43 V33 H136.5 Z" fill="#8e8e8e"/>
<path d="M216 22 V28 M231 23 V29 M221 18 H226 M221 33 H226" stroke="#9aa8d8" stroke-width="1"/>
<rect x="211" y="13" width="10.5" height="9.5" fill="url(#bpIcon)"/>
<rect x="226" y="13.5" width="11.5" height="9.5" fill="url(#bpIcon)"/>
<rect x="202" y="26.5" width="19.5" height="15" fill="url(#bpIcon)"/>
<rect x="226" y="28" width="11.5" height="10" fill="url(#bpIcon)"/>
<text x="260.0" y="38.0" font-size="28" font-weight="normal" font-style="normal" fill="#939393" textLength="251.0" lengthAdjust="spacingAndGlyphs" >BP_MasterBuildPart</text>
<text x="552.0" y="36.0" font-size="27" font-weight="normal" font-style="normal" fill="#939393" textLength="150.0" lengthAdjust="spacingAndGlyphs" >Event Graph</text>
<text x="780.0" y="36.0" font-size="27" font-weight="normal" font-style="normal" fill="#939393" textLength="96.0" lengthAdjust="spacingAndGlyphs" >Destroy</text>
<path d="M524.5 15.5 L535.5 27 L524.5 38.5" fill="none" stroke="#e8e8e8" stroke-width="2.3"/>
<path d="M739 14 L750 25.5 L739 37" fill="none" stroke="#e8e8e8" stroke-width="2.3"/>
<text x="2857.7" y="34.1" font-size="33" font-weight="bold" font-style="normal" fill="#303030" textLength="105.2" lengthAdjust="spacingAndGlyphs" >Zoom -2</text>
<rect x="0" y="0" width="4" height="1716" fill="#3a3a3a"/>
<rect x="1" y="0" width="2" height="1716" fill="#474747"/>
</svg>
</body></html>
